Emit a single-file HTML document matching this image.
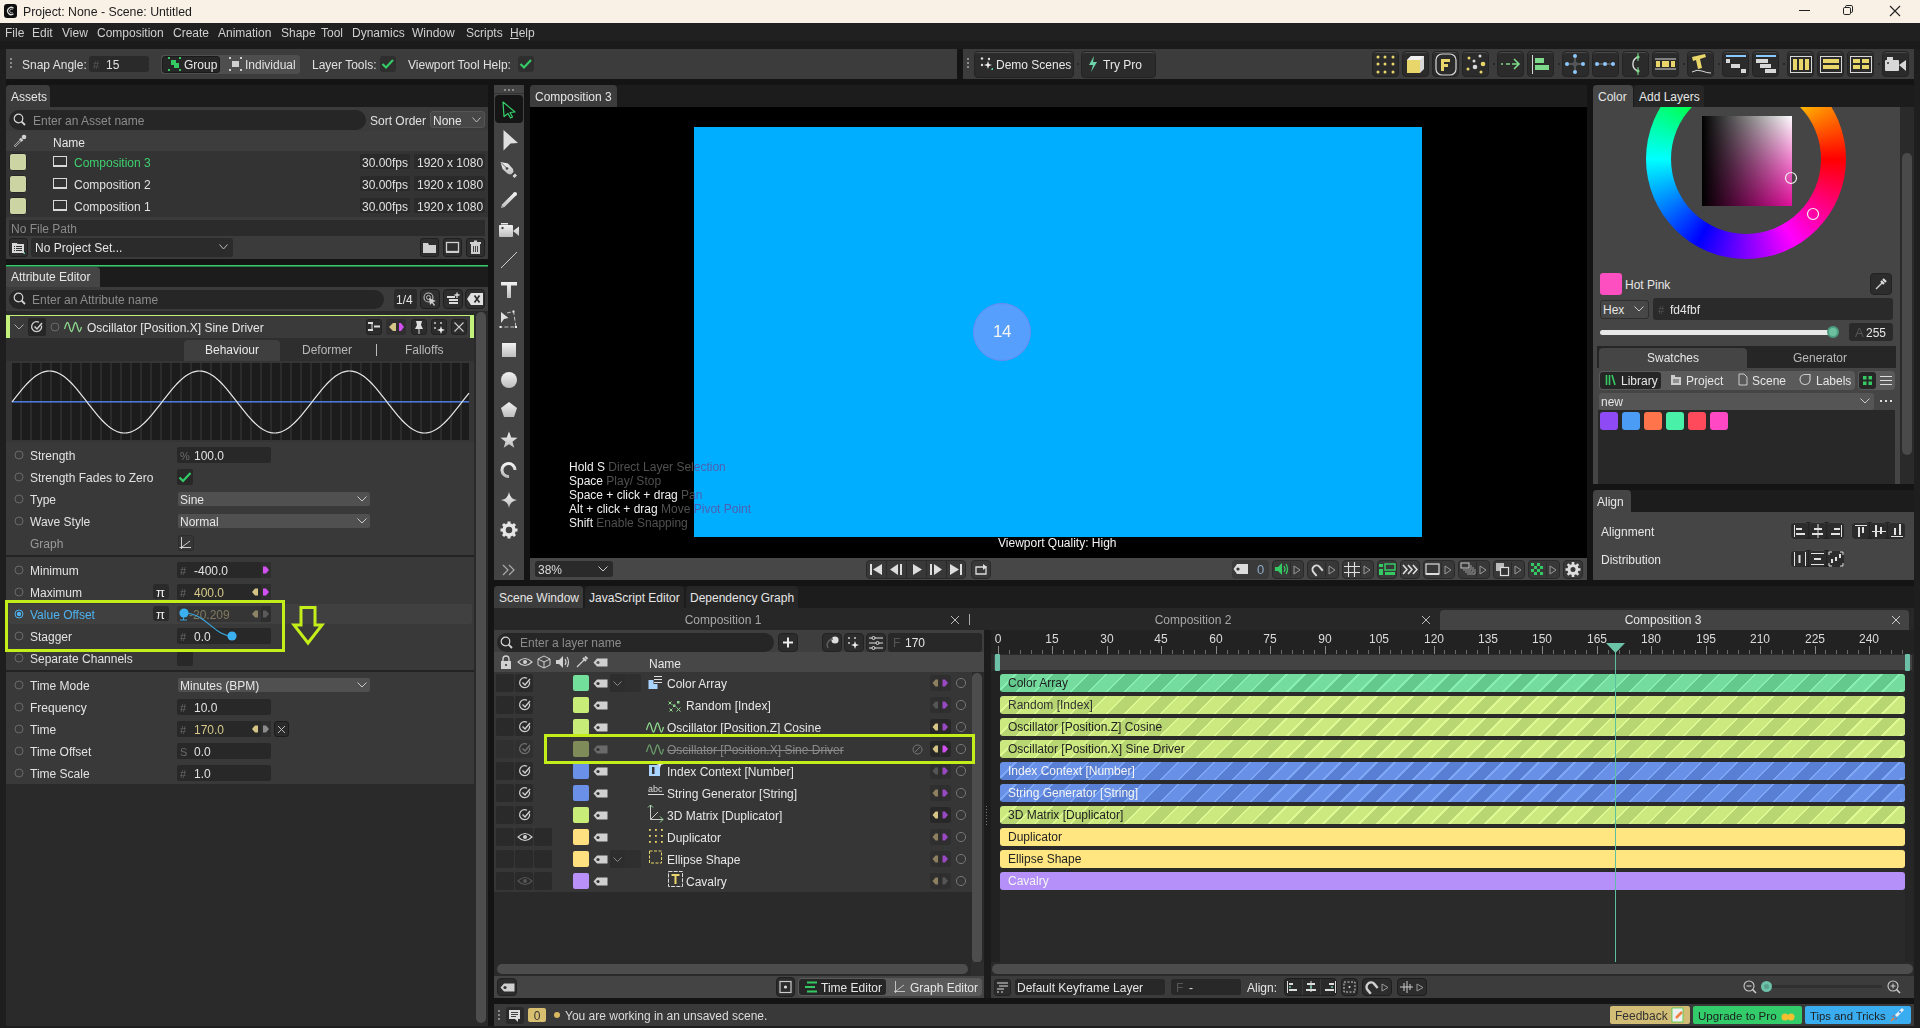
<!DOCTYPE html>
<html><head><meta charset="utf-8">
<style>
*{box-sizing:border-box;margin:0;padding:0}
html,body{width:1920px;height:1028px;overflow:hidden;background:#141414;font-family:"Liberation Sans",sans-serif;font-size:12px;color:#dcdcdc}
.a{position:absolute}
.t{position:absolute;white-space:nowrap;line-height:14px}
svg{position:absolute;overflow:visible}
</style></head><body>
<div class="a" style="left:0px;top:0px;width:1920px;height:23px;background:#f9f1e6;"></div>
<div class="a" style="left:4px;top:4px;width:13px;height:14px;background:#0e0e0e;border-radius:3px"></div>
<svg style="left:4px;top:4px;" width="13" height="14" viewBox="0 0 13 14"><path d="M9.5 4.2 A3.6 3.6 0 1 0 9.5 9.8" fill="none" stroke="#ddd" stroke-width="1.3"/><path d="M8.6 5.6 A1.8 1.8 0 1 0 8.6 8.4" fill="none" stroke="#ddd" stroke-width="0.8"/></svg>
<div class="t" style="left:23px;top:5px;color:#1c1c1c;font-size:12.3px;">Project: None - Scene: Untitled</div>
<div class="a" style="left:1799px;top:10px;width:11px;height:1px;background:#222;"></div>
<svg style="left:1842px;top:4px;" width="12" height="12" viewBox="0 0 12 12"><rect x="1.5" y="3.5" width="7" height="7" rx="1.2" fill="none" stroke="#222" stroke-width="1"/><path d="M3.5 3.5 V2.8 a1.3 1.3 0 0 1 1.3 -1.3 H9.2 a1.3 1.3 0 0 1 1.3 1.3 V7.2 a1.3 1.3 0 0 1 -1.3 1.3 H8.5" fill="none" stroke="#222" stroke-width="1"/></svg>
<svg style="left:1889px;top:5px;" width="12" height="12" viewBox="0 0 12 12"><path d="M1 1 L11 11 M11 1 L1 11" stroke="#222" stroke-width="1.1"/></svg>
<div class="a" style="left:0px;top:23px;width:1920px;height:18px;background:#202020;"></div>
<div class="a" style="left:0px;top:41px;width:1920px;height:8px;background:#1b1b1b;"></div>
<div class="a" style="left:0px;top:49px;width:6px;height:979px;background:#1e1e1e;"></div>
<div class="a" style="left:1914px;top:49px;width:6px;height:979px;background:#1e1e1e;"></div>
<div class="t" style="left:5px;top:26px;color:#d0d0d0;font-size:12px;">File</div>
<div class="t" style="left:32px;top:26px;color:#d0d0d0;font-size:12px;">Edit</div>
<div class="t" style="left:62px;top:26px;color:#d0d0d0;font-size:12px;">View</div>
<div class="t" style="left:97px;top:26px;color:#d0d0d0;font-size:12px;">Composition</div>
<div class="t" style="left:173px;top:26px;color:#d0d0d0;font-size:12px;">Create</div>
<div class="t" style="left:218px;top:26px;color:#d0d0d0;font-size:12px;">Animation</div>
<div class="t" style="left:281px;top:26px;color:#d0d0d0;font-size:12px;">Shape</div>
<div class="t" style="left:321px;top:26px;color:#d0d0d0;font-size:12px;">Tool</div>
<div class="t" style="left:352px;top:26px;color:#d0d0d0;font-size:12px;">Dynamics</div>
<div class="t" style="left:412px;top:26px;color:#d0d0d0;font-size:12px;">Window</div>
<div class="t" style="left:466px;top:26px;color:#d0d0d0;font-size:12px;">Scripts</div>
<div class="t" style="left:510px;top:26px;color:#d0d0d0;font-size:12px;"><u>H</u>elp</div>
<div class="a" style="left:6px;top:49px;width:951px;height:30px;background:#3c3c3c;"></div>
<div class="a" style="left:10px;top:58px;width:2px;height:2px;background:#8a8a8a;"></div>
<div class="a" style="left:10px;top:62px;width:2px;height:2px;background:#8a8a8a;"></div>
<div class="a" style="left:10px;top:66px;width:2px;height:2px;background:#8a8a8a;"></div>
<div class="t" style="left:22px;top:58px;color:#e0e0e0;font-size:12px;">Snap Angle:</div>
<div class="a" style="left:89px;top:56px;width:60px;height:16px;background:#2a2a2a;border-radius:3px"></div>
<div class="t" style="left:93px;top:58px;color:#5a5a5a;font-size:11px;">#</div>
<div class="t" style="left:106px;top:58px;color:#e0e0e0;font-size:12px;">15</div>
<div class="a" style="left:161px;top:55px;width:139px;height:19px;background:#4e4e4e;border-radius:3px"></div>
<div class="a" style="left:162px;top:56px;width:58px;height:17px;background:#262626;border-radius:3px;border:1px solid #1a1a1a"></div>
<svg style="left:168px;top:57px;" width="13" height="14" viewBox="0 0 13 14"><rect x="3" y="3" width="5" height="5" fill="#35c964"/><rect x="6" y="6" width="5" height="5" fill="#35c964"/><rect x="0" y="0" width="2" height="2" fill="#35c964"/><rect x="11" y="0" width="2" height="2" fill="#35c964"/><rect x="0" y="12" width="2" height="2" fill="#35c964"/><rect x="11" y="12" width="2" height="2" fill="#35c964"/></svg>
<div class="t" style="left:184px;top:58px;color:#e8e8e8;font-size:12px;">Group</div>
<svg style="left:229px;top:57px;" width="13" height="14" viewBox="0 0 13 14"><rect x="3" y="4" width="7" height="6" fill="#cfcfcf"/><rect x="0" y="0" width="2" height="2" fill="#cfcfcf"/><rect x="11" y="0" width="2" height="2" fill="#cfcfcf"/><rect x="0" y="12" width="2" height="2" fill="#cfcfcf"/><rect x="11" y="12" width="2" height="2" fill="#cfcfcf"/></svg>
<div class="t" style="left:245px;top:58px;color:#e0e0e0;font-size:12px;">Individual</div>
<div class="t" style="left:312px;top:58px;color:#e0e0e0;font-size:12px;">Layer Tools:</div>
<div class="a" style="left:380px;top:56px;width:16px;height:16px;background:#2e2e2e;border-radius:3px"></div>
<svg style="left:380px;top:56px;" width="16" height="16" viewBox="0 0 16 16"><path d="M2.5 8 L6 11.5 L13 4" fill="none" stroke="#33cc66" stroke-width="2.2"/></svg>
<div class="t" style="left:408px;top:58px;color:#e0e0e0;font-size:12px;">Viewport Tool Help:</div>
<div class="a" style="left:518px;top:56px;width:16px;height:16px;background:#2e2e2e;border-radius:3px"></div>
<svg style="left:518px;top:56px;" width="16" height="16" viewBox="0 0 16 16"><path d="M2.5 8 L6 11.5 L13 4" fill="none" stroke="#33cc66" stroke-width="2.2"/></svg>
<div class="a" style="left:963px;top:49px;width:951px;height:30px;background:#3c3c3c;"></div>
<div class="a" style="left:967px;top:58px;width:2px;height:2px;background:#8a8a8a;"></div>
<div class="a" style="left:967px;top:62px;width:2px;height:2px;background:#8a8a8a;"></div>
<div class="a" style="left:967px;top:66px;width:2px;height:2px;background:#8a8a8a;"></div>
<div class="a" style="left:974px;top:51px;width:100px;height:27px;background:#2b2b2b;border-radius:4px;border:1px solid #232323;box-shadow:inset 0 1px 0 #4f4f4f"></div>
<svg style="left:980px;top:56px;" width="14" height="16" viewBox="0 0 14 16"><circle cx="2" cy="2.5" r="1.2" fill="#ddd"/><circle cx="9" cy="3" r="1.2" fill="#ddd"/><circle cx="2" cy="9" r="1.2" fill="#ddd"/><path d="M8 5 L9 8 L12 9 L9 10 L8 13 L7 10 L4 9 L7 8Z" fill="#eee"/><path d="M12 12 L13 12 L13 14 L11 14Z" fill="#5ad0a0"/></svg>
<div class="t" style="left:996px;top:58px;color:#e8e8e8;font-size:12px;">Demo Scenes</div>
<div class="a" style="left:1077px;top:63px;width:2px;height:2px;background:#2a2a2a;"></div>
<div class="a" style="left:1081px;top:51px;width:75px;height:27px;background:#2b2b2b;border-radius:4px;border:1px solid #232323;box-shadow:inset 0 1px 0 #4f4f4f"></div>
<svg style="left:1088px;top:56px;" width="10" height="16" viewBox="0 0 10 16"><path d="M6 0 L1 9 L5 9 L3 16 L9 6 L5 6 Z" fill="#6cd4a8"/></svg>
<div class="t" style="left:1103px;top:58px;color:#e8e8e8;font-size:12px;">Try Pro</div>
<div class="a" style="left:1372px;top:51px;width:27px;height:26px;background:#2b2b2b;border-radius:4px;border:1px solid #232323;box-shadow:inset 0 1px 0 #4a4a4a"></div>
<div class="a" style="left:1402px;top:51px;width:27px;height:26px;background:#2b2b2b;border-radius:4px;border:1px solid #232323;box-shadow:inset 0 1px 0 #4a4a4a"></div>
<div class="a" style="left:1432px;top:51px;width:27px;height:26px;background:#2b2b2b;border-radius:4px;border:1px solid #232323;box-shadow:inset 0 1px 0 #4a4a4a"></div>
<div class="a" style="left:1462px;top:51px;width:27px;height:26px;background:#2b2b2b;border-radius:4px;border:1px solid #232323;box-shadow:inset 0 1px 0 #4a4a4a"></div>
<div class="a" style="left:1497px;top:51px;width:27px;height:26px;background:#2b2b2b;border-radius:4px;border:1px solid #232323;box-shadow:inset 0 1px 0 #4a4a4a"></div>
<div class="a" style="left:1527px;top:51px;width:27px;height:26px;background:#2b2b2b;border-radius:4px;border:1px solid #232323;box-shadow:inset 0 1px 0 #4a4a4a"></div>
<div class="a" style="left:1562px;top:51px;width:27px;height:26px;background:#2b2b2b;border-radius:4px;border:1px solid #232323;box-shadow:inset 0 1px 0 #4a4a4a"></div>
<div class="a" style="left:1592px;top:51px;width:27px;height:26px;background:#2b2b2b;border-radius:4px;border:1px solid #232323;box-shadow:inset 0 1px 0 #4a4a4a"></div>
<div class="a" style="left:1622px;top:51px;width:27px;height:26px;background:#2b2b2b;border-radius:4px;border:1px solid #232323;box-shadow:inset 0 1px 0 #4a4a4a"></div>
<div class="a" style="left:1652px;top:51px;width:27px;height:26px;background:#2b2b2b;border-radius:4px;border:1px solid #232323;box-shadow:inset 0 1px 0 #4a4a4a"></div>
<div class="a" style="left:1687px;top:51px;width:27px;height:26px;background:#2b2b2b;border-radius:4px;border:1px solid #232323;box-shadow:inset 0 1px 0 #4a4a4a"></div>
<div class="a" style="left:1722px;top:51px;width:27px;height:26px;background:#2b2b2b;border-radius:4px;border:1px solid #232323;box-shadow:inset 0 1px 0 #4a4a4a"></div>
<div class="a" style="left:1752px;top:51px;width:27px;height:26px;background:#2b2b2b;border-radius:4px;border:1px solid #232323;box-shadow:inset 0 1px 0 #4a4a4a"></div>
<div class="a" style="left:1787px;top:51px;width:27px;height:26px;background:#2b2b2b;border-radius:4px;border:1px solid #232323;box-shadow:inset 0 1px 0 #4a4a4a"></div>
<div class="a" style="left:1817px;top:51px;width:27px;height:26px;background:#2b2b2b;border-radius:4px;border:1px solid #232323;box-shadow:inset 0 1px 0 #4a4a4a"></div>
<div class="a" style="left:1847px;top:51px;width:27px;height:26px;background:#2b2b2b;border-radius:4px;border:1px solid #232323;box-shadow:inset 0 1px 0 #4a4a4a"></div>
<div class="a" style="left:1882px;top:51px;width:27px;height:26px;background:#2b2b2b;border-radius:4px;border:1px solid #232323;box-shadow:inset 0 1px 0 #4a4a4a"></div>
<div class="a" style="left:1493px;top:63px;width:2px;height:2px;background:#262626;"></div>
<div class="a" style="left:1558px;top:63px;width:2px;height:2px;background:#262626;"></div>
<div class="a" style="left:1683px;top:63px;width:2px;height:2px;background:#262626;"></div>
<div class="a" style="left:1718px;top:63px;width:2px;height:2px;background:#262626;"></div>
<div class="a" style="left:1783px;top:63px;width:2px;height:2px;background:#262626;"></div>
<div class="a" style="left:1878px;top:63px;width:2px;height:2px;background:#262626;"></div>
<svg style="left:1372px;top:51px;" width="27" height="26" viewBox="0 0 27 26"><circle cx="6" cy="6" r="1.5" fill="#e9d66b"/><circle cx="6" cy="13" r="1.5" fill="#e9d66b"/><circle cx="6" cy="21" r="1.5" fill="#e9d66b"/><circle cx="13" cy="6" r="1.5" fill="#e9d66b"/><circle cx="13" cy="13" r="1.5" fill="#e9d66b"/><circle cx="13" cy="21" r="1.5" fill="#e9d66b"/><circle cx="21" cy="6" r="1.5" fill="#e9d66b"/><circle cx="21" cy="13" r="1.5" fill="#e9d66b"/><circle cx="21" cy="21" r="1.5" fill="#e9d66b"/></svg>
<svg style="left:1402px;top:51px;" width="27" height="26" viewBox="0 0 27 26"><path d="M5 9 L9 5 L22 5 L22 18 L18 22 L5 22Z" fill="#d8d8d8"/><rect x="5" y="9" width="13" height="13" fill="#e9d66b"/><path d="M5 9 L9 5 L22 5 L18 9Z" fill="#f0f0f0"/></svg>
<svg style="left:1432px;top:51px;" width="27" height="26" viewBox="0 0 27 26"><rect x="4" y="3" width="20" height="21" rx="6" fill="none" stroke="#d8d8d8" stroke-width="1.2"/><rect x="9" y="8" width="3" height="12" fill="#e9d66b"/><rect x="9" y="8" width="9" height="3" fill="#e9d66b"/><rect x="9" y="13" width="7" height="3" fill="#e9d66b"/></svg>
<svg style="left:1462px;top:51px;" width="27" height="26" viewBox="0 0 27 26"><circle cx="7" cy="7" r="1.5" fill="#e9d66b"/><circle cx="18" cy="5" r="1.5" fill="#d8d8d8"/><circle cx="12" cy="10" r="1.5" fill="#d8d8d8"/><circle cx="21" cy="13" r="2.3" fill="#e9d66b"/><circle cx="13" cy="16" r="2.3" fill="#d8d8d8"/><circle cx="6" cy="18" r="1.5" fill="#e9d66b"/><circle cx="19" cy="21" r="1.5" fill="#e9d66b"/></svg>
<svg style="left:1497px;top:51px;" width="27" height="26" viewBox="0 0 27 26"><path d="M4 13 H6 M9 13 H13 M15 13 H22 M17 8 L22 13 L17 18" fill="none" stroke="#7fd98a" stroke-width="1.6"/></svg>
<svg style="left:1527px;top:51px;" width="27" height="26" viewBox="0 0 27 26"><rect x="5" y="4" width="1" height="19" fill="#d8d8d8"/><rect x="8" y="7" width="9" height="5" fill="#7fd98a"/><rect x="8" y="14" width="14" height="5" fill="#7fd98a"/></svg>
<svg style="left:1562px;top:51px;" width="27" height="26" viewBox="0 0 27 26"><circle cx="13" cy="5" r="2" fill="#8cc8ff"/><circle cx="13" cy="21" r="2" fill="#8cc8ff"/><circle cx="5" cy="13" r="2" fill="#8cc8ff"/><circle cx="21" cy="13" r="2" fill="#8cc8ff"/><circle cx="13" cy="13" r="2" fill="#8cc8ff"/><path d="M13 7 V19 M7 13 H19" stroke="#555" stroke-width="2"/></svg>
<svg style="left:1592px;top:51px;" width="27" height="26" viewBox="0 0 27 26"><path d="M5 13 H21" stroke="#555" stroke-width="2"/><circle cx="5" cy="13" r="2" fill="#8cc8ff"/><circle cx="13" cy="13" r="2" fill="#8cc8ff"/><circle cx="21" cy="13" r="2" fill="#8cc8ff"/></svg>
<svg style="left:1622px;top:51px;" width="27" height="26" viewBox="0 0 27 26"><path d="M16 6 A8 7.5 0 0 0 16 20" fill="none" stroke="#d8d8d8" stroke-width="1.4"/><circle cx="16" cy="6" r="1.6" fill="#7fd98a"/><circle cx="16" cy="20" r="1.6" fill="#7fd98a"/><path d="M16 2 V10 M16 16 V24" stroke="#7fd98a" stroke-width="1"/></svg>
<svg style="left:1652px;top:51px;" width="27" height="26" viewBox="0 0 27 26"><path d="M3 8 H24 M3 18 H24" stroke="#d8d8d8" stroke-width="1"/><rect x="4" y="10" width="4" height="6" fill="#e9d66b"/><rect x="10" y="10" width="7" height="6" fill="#e9d66b"/><rect x="19" y="10" width="4" height="6" fill="#e9d66b"/></svg>
<svg style="left:1687px;top:51px;" width="27" height="26" viewBox="0 0 27 26"><path d="M5 6 L18 3 L19 6 L13 8 L15 17 L11 18 L9 9 L6 10Z" fill="#e9d66b"/><path d="M5 21 Q10 18 15 20 T24 22" fill="none" stroke="#d8d8d8" stroke-width="1"/></svg>
<svg style="left:1722px;top:51px;" width="27" height="26" viewBox="0 0 27 26"><rect x="4" y="4" width="20" height="2" fill="#8cc8ff"/><rect x="4" y="8" width="4" height="4" fill="#d8d8d8"/><rect x="9" y="13" width="9" height="4" fill="#d8d8d8"/><rect x="19" y="18" width="5" height="4" fill="#d8d8d8"/></svg>
<svg style="left:1752px;top:51px;" width="27" height="26" viewBox="0 0 27 26"><rect x="4" y="4" width="20" height="2" fill="#8cc8ff"/><rect x="4" y="8" width="12" height="4" fill="#d8d8d8"/><rect x="8" y="13" width="11" height="4" fill="#d8d8d8"/><rect x="13" y="18" width="11" height="4" fill="#d8d8d8"/></svg>
<svg style="left:1787px;top:51px;" width="27" height="26" viewBox="0 0 27 26"><rect x="3.5" y="5.5" width="21" height="16" fill="none" stroke="#d8d8d8" stroke-width="1"/><rect x="6" y="8" width="4" height="11" fill="#e9d66b"/><rect x="12" y="8" width="4" height="11" fill="#e9d66b"/><rect x="18" y="8" width="4" height="11" fill="#e9d66b"/></svg>
<svg style="left:1817px;top:51px;" width="27" height="26" viewBox="0 0 27 26"><rect x="3.5" y="5.5" width="21" height="16" fill="none" stroke="#d8d8d8" stroke-width="1"/><rect x="6" y="8" width="16" height="4" fill="#e9d66b"/><rect x="6" y="14" width="16" height="4" fill="#e9d66b"/></svg>
<svg style="left:1847px;top:51px;" width="27" height="26" viewBox="0 0 27 26"><rect x="3.5" y="5.5" width="21" height="16" fill="none" stroke="#d8d8d8" stroke-width="1"/><rect x="6" y="8" width="7" height="4" fill="#e9d66b"/><rect x="15" y="8" width="7" height="4" fill="#e9d66b"/><rect x="6" y="14" width="7" height="4" fill="#e9d66b"/><rect x="15" y="14" width="7" height="4" fill="#e9d66b"/></svg>
<svg style="left:1882px;top:51px;" width="27" height="26" viewBox="0 0 27 26"><rect x="3" y="9" width="14" height="11" rx="1" fill="#d8d8d8"/><rect x="5" y="6" width="6" height="3" fill="#d8d8d8"/><path d="M17 14 L24 9 V20Z" fill="#d8d8d8"/><circle cx="6" cy="12" r="1" fill="#333"/></svg>
<div class="a" style="left:6px;top:85px;width:482px;height:22px;background:#1c1c1c;"></div>
<div class="a" style="left:6px;top:85px;width:44px;height:22px;background:#3c3c3c;border-radius:4px 4px 0 0"></div>
<div class="t" style="left:11px;top:90px;color:#e6e6e6;font-size:12px;">Assets</div>
<div class="a" style="left:6px;top:107px;width:482px;height:24px;background:#3b3b3b;"></div>
<div class="a" style="left:9px;top:110px;width:357px;height:20px;background:#262626;border-radius:10px"></div>
<svg style="left:13px;top:113px;" width="14" height="14" viewBox="0 0 14 14"><circle cx="5.5" cy="5.5" r="4.3" fill="none" stroke="#d6d6d6" stroke-width="1.2"/><path d="M8.6 8.6 L12 12" stroke="#d6d6d6" stroke-width="1.8"/></svg>
<div class="t" style="left:33px;top:114px;color:#8c8c8c;font-size:12px;">Enter an Asset name</div>
<div class="t" style="left:370px;top:114px;color:#e0e0e0;font-size:12px;">Sort Order</div>
<div class="a" style="left:430px;top:111px;width:55px;height:17px;background:#474747;border-radius:3px;border:1px solid #555"></div>
<div class="t" style="left:433px;top:114px;color:#e6e6e6;font-size:12px;">None</div>
<svg style="left:472px;top:117px;" width="9" height="6" viewBox="0 0 9 6"><path d="M0.5 0.5 L4.5 5 L8.5 0.5" fill="none" stroke="#bbb" stroke-width="1"/></svg>
<div class="a" style="left:6px;top:131px;width:482px;height:20px;background:#3d3d3d;"></div>
<svg style="left:13px;top:134px;" width="14" height="14" viewBox="0 0 14 14"><path d="M1.5 12.5 L8 6" stroke="#aaa" stroke-width="2.2"/><path d="M2 12 L8 6" stroke="#333" stroke-width="0.8"/><path d="M7 4.5 L9.5 7" stroke="#d0d0d0" stroke-width="2.4"/><circle cx="11" cy="3" r="2.3" fill="#d0d0d0"/></svg>
<div class="t" style="left:53px;top:136px;color:#e6e6e6;font-size:12px;">Name</div>
<div class="a" style="left:6px;top:151px;width:482px;height:66px;background:#333333;"></div>
<div class="a" style="left:9px;top:153px;width:18px;height:18px;background:#ccd4a4;border-radius:3px;border:1px solid #262626"></div>
<svg style="left:53px;top:155px;" width="14" height="14" viewBox="0 0 14 14"><rect x="0.5" y="1.5" width="13" height="10" fill="none" stroke="#d8d8d8" stroke-width="1"/><rect x="0" y="10" width="14" height="2" fill="#d8d8d8"/></svg>
<div class="t" style="left:74px;top:156px;color:#3ecf6e;font-size:12px;">Composition 3</div>
<div class="a" style="left:360px;top:154px;width:50px;height:15px;background:#2a2a2a;border-radius:2px"></div>
<div class="t" style="left:362px;top:156px;color:#e2e2e2;font-size:12px;">30.00fps</div>
<div class="a" style="left:414px;top:154px;width:71px;height:15px;background:#2a2a2a;border-radius:2px"></div>
<div class="t" style="left:417px;top:156px;color:#e2e2e2;font-size:12px;">1920 x 1080</div>
<div class="a" style="left:9px;top:175px;width:18px;height:18px;background:#ccd4a4;border-radius:3px;border:1px solid #262626"></div>
<svg style="left:53px;top:177px;" width="14" height="14" viewBox="0 0 14 14"><rect x="0.5" y="1.5" width="13" height="10" fill="none" stroke="#d8d8d8" stroke-width="1"/><rect x="0" y="10" width="14" height="2" fill="#d8d8d8"/></svg>
<div class="t" style="left:74px;top:178px;color:#e2e2e2;font-size:12px;">Composition 2</div>
<div class="a" style="left:360px;top:176px;width:50px;height:15px;background:#2a2a2a;border-radius:2px"></div>
<div class="t" style="left:362px;top:178px;color:#e2e2e2;font-size:12px;">30.00fps</div>
<div class="a" style="left:414px;top:176px;width:71px;height:15px;background:#2a2a2a;border-radius:2px"></div>
<div class="t" style="left:417px;top:178px;color:#e2e2e2;font-size:12px;">1920 x 1080</div>
<div class="a" style="left:9px;top:197px;width:18px;height:18px;background:#ccd4a4;border-radius:3px;border:1px solid #262626"></div>
<svg style="left:53px;top:199px;" width="14" height="14" viewBox="0 0 14 14"><rect x="0.5" y="1.5" width="13" height="10" fill="none" stroke="#d8d8d8" stroke-width="1"/><rect x="0" y="10" width="14" height="2" fill="#d8d8d8"/></svg>
<div class="t" style="left:74px;top:200px;color:#e2e2e2;font-size:12px;">Composition 1</div>
<div class="a" style="left:360px;top:198px;width:50px;height:15px;background:#2a2a2a;border-radius:2px"></div>
<div class="t" style="left:362px;top:200px;color:#e2e2e2;font-size:12px;">30.00fps</div>
<div class="a" style="left:414px;top:198px;width:71px;height:15px;background:#2a2a2a;border-radius:2px"></div>
<div class="t" style="left:417px;top:200px;color:#e2e2e2;font-size:12px;">1920 x 1080</div>
<div class="a" style="left:6px;top:217px;width:482px;height:42px;background:#3b3b3b;"></div>
<div class="a" style="left:9px;top:220px;width:476px;height:16px;background:#2b2b2b;"></div>
<div class="t" style="left:11px;top:222px;color:#8a8a8a;font-size:12px;">No File Path</div>
<div class="a" style="left:9px;top:238px;width:19px;height:19px;background:#2e2e2e;border-radius:3px;border:1px solid #1f1f1f"></div>
<svg style="left:11px;top:241px;" width="15" height="14" viewBox="0 0 15 14"><rect x="1" y="3" width="12" height="9" fill="#d8d8d8"/><path d="M1 2.5 H6 L7 3.5" fill="none" stroke="#d8d8d8" stroke-width="1"/><path d="M3 5.5 H4 M5 5.5 H11 M3 7.5 H4 M5 7.5 H11 M3 9.5 H4 M5 9.5 H11" stroke="#333" stroke-width="1"/><path d="M12 13 L14 11 V13Z" fill="#5ad0a0"/></svg>
<div class="a" style="left:31px;top:238px;width:202px;height:19px;background:#2b2b2b;border-radius:3px"></div>
<div class="t" style="left:35px;top:241px;color:#e6e6e6;font-size:12px;">No Project Set...</div>
<svg style="left:219px;top:244px;" width="9" height="6" viewBox="0 0 9 6"><path d="M0.5 0.5 L4.5 5 L8.5 0.5" fill="none" stroke="#bbb" stroke-width="1"/></svg>
<div class="a" style="left:420px;top:238px;width:19px;height:19px;background:#2e2e2e;border-radius:3px;border:1px solid #1f1f1f"></div>
<div class="a" style="left:443px;top:238px;width:19px;height:19px;background:#2e2e2e;border-radius:3px;border:1px solid #1f1f1f"></div>
<div class="a" style="left:466px;top:238px;width:19px;height:19px;background:#2e2e2e;border-radius:3px;border:1px solid #1f1f1f"></div>
<svg style="left:422px;top:241px;" width="16" height="13" viewBox="0 0 16 13"><path d="M1 2 H6 L7 4 H14 V12 H1Z" fill="#cfcfcf"/></svg>
<svg style="left:445px;top:241px;" width="16" height="13" viewBox="0 0 16 13"><rect x="1.5" y="1.5" width="12" height="9" fill="none" stroke="#cfcfcf" stroke-width="1.3"/><rect x="1" y="10" width="13" height="2" fill="#cfcfcf"/></svg>
<svg style="left:468px;top:240px;" width="16" height="15" viewBox="0 0 16 15"><rect x="3" y="4" width="9" height="10" fill="#cfcfcf"/><rect x="2" y="2" width="11" height="2" fill="#cfcfcf"/><rect x="6" y="0.5" width="3" height="2" fill="#cfcfcf"/><path d="M5.5 6 V12 M7.5 6 V12 M9.5 6 V12" stroke="#444" stroke-width="1"/></svg>
<div class="a" style="left:6px;top:265px;width:482px;height:1px;background:#33cc66;"></div>
<div class="a" style="left:6px;top:266px;width:482px;height:1px;background:#2a7a48;"></div>
<div class="a" style="left:6px;top:267px;width:482px;height:20px;background:#1c1c1c;"></div>
<div class="a" style="left:6px;top:267px;width:94px;height:20px;background:#454545;border-radius:0 4px 0 0"></div>
<div class="t" style="left:11px;top:270px;color:#e6e6e6;font-size:12px;">Attribute Editor</div>
<div class="a" style="left:6px;top:287px;width:482px;height:24px;background:#3b3b3b;"></div>
<div class="a" style="left:9px;top:290px;width:375px;height:19px;background:#262626;border-radius:10px"></div>
<svg style="left:13px;top:292px;" width="14" height="14" viewBox="0 0 14 14"><circle cx="5.5" cy="5.5" r="4.3" fill="none" stroke="#d6d6d6" stroke-width="1.2"/><path d="M8.6 8.6 L12 12" stroke="#d6d6d6" stroke-width="1.8"/></svg>
<div class="t" style="left:32px;top:293px;color:#8c8c8c;font-size:12px;">Enter an Attribute name</div>
<div class="a" style="left:394px;top:289px;width:23px;height:20px;background:#2a2a2a;border-radius:3px"></div>
<div class="t" style="left:396px;top:293px;color:#e6e6e6;font-size:12px;">1/4</div>
<div class="a" style="left:420px;top:289px;width:20px;height:20px;background:#2e2e2e;border-radius:4px;border:1px solid #1f1f1f"></div>
<div class="a" style="left:443px;top:289px;width:20px;height:20px;background:#2e2e2e;border-radius:4px;border:1px solid #1f1f1f"></div>
<div class="a" style="left:465px;top:289px;width:20px;height:20px;background:#2e2e2e;border-radius:4px;border:1px solid #1f1f1f"></div>
<svg style="left:423px;top:292px;" width="14" height="14" viewBox="0 0 14 14"><circle cx="5.5" cy="5.5" r="4.5" fill="none" stroke="#bbb" stroke-width="1.1"/><circle cx="5.5" cy="5.5" r="2" fill="none" stroke="#bbb" stroke-width="1"/><path d="M6 6 L13 9 L10 10 L12 13 L11 14 L9 11 L7 13Z" fill="#ccc"/></svg>
<svg style="left:446px;top:292px;" width="15" height="14" viewBox="0 0 15 14"><rect x="1" y="4" width="8" height="2" fill="#ddd"/><rect x="3" y="7" width="9" height="2" fill="#ddd"/><rect x="3" y="10" width="9" height="2" fill="#ddd"/><path d="M11 0.5 V6 M8.5 3 H13.5" stroke="#ddd" stroke-width="1.3"/></svg>
<svg style="left:467px;top:293px;" width="17" height="12" viewBox="0 0 17 12"><path d="M4 0 H16 V12 H4 L0 6Z" fill="#e0e0e0"/><path d="M7.5 2.5 L12.5 9.5 M12.5 2.5 L7.5 9.5" stroke="#2a2a2a" stroke-width="1.6"/></svg>
<div class="a" style="left:6px;top:311px;width:482px;height:715px;background:#2a2a2a;"></div>
<div class="a" style="left:476px;top:312px;width:10px;height:711px;background:#4d4d4d;border-radius:5px"></div>
<div class="a" style="left:6px;top:315px;width:468px;height:23px;background:#3a3a3a;"></div>
<div class="a" style="left:6px;top:315px;width:468px;height:1px;background:#c3f27a;"></div>
<div class="a" style="left:6px;top:315px;width:4px;height:23px;background:#c3f27a;"></div>
<div class="a" style="left:470px;top:315px;width:4px;height:23px;background:#c3f27a;"></div>
<svg style="left:14px;top:324px;" width="10" height="6" viewBox="0 0 10 6"><path d="M0.5 0.5 L5.0 5 L9.5 0.5" fill="none" stroke="#aaa" stroke-width="1"/></svg>
<div class="a" style="left:28px;top:318px;width:18px;height:18px;background:#262626;border-radius:2px"></div>
<svg style="left:30px;top:320px;" width="14" height="14" viewBox="0 0 14 14"><path d="M11.5 5.5 A5 5 0 1 1 9 2.2" fill="none" stroke="#d0d0d0" stroke-width="1.3"/><path d="M4.5 6.5 L7 9 L12 3" fill="none" stroke="#d0d0d0" stroke-width="1.5"/></svg>
<svg style="left:50px;top:322px;" width="10" height="10" viewBox="0 0 10 10"><circle cx="5" cy="5" r="4" fill="none" stroke="#6a6a6a" stroke-width="1"/></svg>
<svg style="left:64px;top:321px;" width="19" height="12" viewBox="0 0 19 12"><path d="M0.5 8 C1.5 5, 2.5 1.5, 3.5 1.5 C5 1.5, 6 10.5, 7.5 10.5 C9 10.5, 10 1.5, 11.5 1.5 C13 1.5, 14 10.5, 15.5 10.5 C16.3 10.5, 16.8 8, 17.5 6" fill="none" stroke="#8ed88e" stroke-width="1.3"/></svg>
<div class="t" style="left:87px;top:321px;color:#e6e6e6;font-size:12px;">Oscillator [Position.X] Sine Driver</div>
<div class="a" style="left:366px;top:319px;width:16px;height:16px;background:#2c2c2c;border-radius:3px;border:1px solid #222"></div>
<div class="a" style="left:411px;top:319px;width:16px;height:16px;background:#2c2c2c;border-radius:3px;border:1px solid #222"></div>
<div class="a" style="left:431px;top:319px;width:16px;height:16px;background:#2c2c2c;border-radius:3px;border:1px solid #222"></div>
<div class="a" style="left:451px;top:319px;width:16px;height:16px;background:#2c2c2c;border-radius:3px;border:1px solid #222"></div>
<div class="a" style="left:386px;top:319px;width:20px;height:16px;background:#2f2f2f;border-radius:3px"></div>
<svg style="left:367px;top:321px;" width="14" height="12" viewBox="0 0 14 12"><rect x="1" y="1" width="5" height="2" fill="#ddd"/><rect x="1" y="8" width="5" height="2" fill="#ddd"/><rect x="7" y="4.5" width="6" height="2" fill="#ddd"/><path d="M5 2 V9" stroke="#ddd" stroke-width="1"/></svg>
<svg style="left:388px;top:322px;" width="17" height="10" viewBox="0 0 17 10"><path d="M5 1 L1 5 L5 9 H8 V1Z" fill="#d4c485"/><path d="M11 1 H13 L16 5 L13 9 H11Z" fill="#d050f0"/></svg>
<svg style="left:413px;top:320px;" width="12" height="15" viewBox="0 0 12 15"><path d="M3 1 H9 L8 5 L10 9 H2 L4 5Z" fill="#ddd"/><rect x="5.5" y="9" width="1" height="5" fill="#ddd"/></svg>
<svg style="left:433px;top:321px;" width="13" height="13" viewBox="0 0 13 13"><circle cx="2" cy="2" r="1" fill="#ccc"/><circle cx="8" cy="2" r="1" fill="#ccc"/><circle cx="2" cy="7" r="1" fill="#ccc"/><path d="M8 5 L9 8 L12 9 L9 10 L8 13 L7 10 L4 9 L7 8Z" fill="#eee"/></svg>
<svg style="left:453px;top:321px;" width="12" height="12" viewBox="0 0 12 12"><path d="M1.5 1.5 L10.5 10.5 M10.5 1.5 L1.5 10.5" stroke="#ccc" stroke-width="1.1"/></svg>
<div class="a" style="left:6px;top:338px;width:468px;height:23px;background:#2e2e2e;"></div>
<div class="a" style="left:184px;top:340px;width:96px;height:21px;background:#3f3f3f;border-radius:4px 4px 0 0"></div>
<div class="t" style="left:32px;width:400px;text-align:center;top:343px;color:#e8e8e8;font-size:12px;">Behaviour</div>
<div class="t" style="left:302px;top:343px;color:#b8b8b8;font-size:12px;">Deformer</div>
<div class="a" style="left:376px;top:344px;width:1px;height:12px;background:#bbb;"></div>
<div class="t" style="left:405px;top:343px;color:#b8b8b8;font-size:12px;">Falloffs</div>
<div class="a" style="left:6px;top:361px;width:468px;height:81px;background:#353535;"></div>
<svg style="left:12px;top:363px;" width="457" height="77" viewBox="0 0 457 77"><rect width="457" height="77" fill="#1c1c1c"/><rect x="8" y="0" width="2" height="77" fill="#2b2b2b"/><rect x="18" y="0" width="2" height="77" fill="#2b2b2b"/><rect x="28" y="0" width="2" height="77" fill="#2b2b2b"/><rect x="38" y="0" width="2" height="77" fill="#2b2b2b"/><rect x="48" y="0" width="2" height="77" fill="#2b2b2b"/><rect x="58" y="0" width="2" height="77" fill="#2b2b2b"/><rect x="68" y="0" width="2" height="77" fill="#2b2b2b"/><rect x="78" y="0" width="2" height="77" fill="#2b2b2b"/><rect x="88" y="0" width="2" height="77" fill="#2b2b2b"/><rect x="98" y="0" width="2" height="77" fill="#2b2b2b"/><rect x="108" y="0" width="2" height="77" fill="#2b2b2b"/><rect x="118" y="0" width="2" height="77" fill="#2b2b2b"/><rect x="128" y="0" width="2" height="77" fill="#2b2b2b"/><rect x="138" y="0" width="2" height="77" fill="#2b2b2b"/><rect x="148" y="0" width="2" height="77" fill="#2b2b2b"/><rect x="158" y="0" width="2" height="77" fill="#2b2b2b"/><rect x="168" y="0" width="2" height="77" fill="#2b2b2b"/><rect x="178" y="0" width="2" height="77" fill="#2b2b2b"/><rect x="188" y="0" width="2" height="77" fill="#2b2b2b"/><rect x="198" y="0" width="2" height="77" fill="#2b2b2b"/><rect x="208" y="0" width="2" height="77" fill="#2b2b2b"/><rect x="218" y="0" width="2" height="77" fill="#2b2b2b"/><rect x="228" y="0" width="2" height="77" fill="#2b2b2b"/><rect x="238" y="0" width="2" height="77" fill="#2b2b2b"/><rect x="248" y="0" width="2" height="77" fill="#2b2b2b"/><rect x="258" y="0" width="2" height="77" fill="#2b2b2b"/><rect x="268" y="0" width="2" height="77" fill="#2b2b2b"/><rect x="278" y="0" width="2" height="77" fill="#2b2b2b"/><rect x="288" y="0" width="2" height="77" fill="#2b2b2b"/><rect x="298" y="0" width="2" height="77" fill="#2b2b2b"/><rect x="308" y="0" width="2" height="77" fill="#2b2b2b"/><rect x="318" y="0" width="2" height="77" fill="#2b2b2b"/><rect x="328" y="0" width="2" height="77" fill="#2b2b2b"/><rect x="338" y="0" width="2" height="77" fill="#2b2b2b"/><rect x="348" y="0" width="2" height="77" fill="#2b2b2b"/><rect x="358" y="0" width="2" height="77" fill="#2b2b2b"/><rect x="368" y="0" width="2" height="77" fill="#2b2b2b"/><rect x="378" y="0" width="2" height="77" fill="#2b2b2b"/><rect x="388" y="0" width="2" height="77" fill="#2b2b2b"/><rect x="398" y="0" width="2" height="77" fill="#2b2b2b"/><rect x="408" y="0" width="2" height="77" fill="#2b2b2b"/><rect x="418" y="0" width="2" height="77" fill="#2b2b2b"/><rect x="428" y="0" width="2" height="77" fill="#2b2b2b"/><rect x="438" y="0" width="2" height="77" fill="#2b2b2b"/><rect x="448" y="0" width="2" height="77" fill="#2b2b2b"/><rect x="0" y="38" width="457" height="1.6" fill="#4a78d8"/><polyline points="0,39.00 1,37.70 2,36.41 3,35.11 4,33.83 5,32.55 6,31.29 7,30.04 8,28.81 9,27.59 10,26.39 11,25.22 12,24.07 13,22.94 14,21.84 15,20.78 16,19.74 17,18.74 18,17.78 19,16.85 20,15.96 21,15.11 22,14.31 23,13.54 24,12.83 25,12.15 26,11.53 27,10.95 28,10.42 29,9.94 30,9.52 31,9.14 32,8.82 33,8.55 34,8.33 35,8.17 36,8.06 37,8.01 38,8.01 39,8.06 40,8.17 41,8.33 42,8.55 43,8.82 44,9.14 45,9.52 46,9.94 47,10.42 48,10.95 49,11.53 50,12.15 51,12.83 52,13.54 53,14.31 54,15.11 55,15.96 56,16.85 57,17.78 58,18.74 59,19.74 60,20.78 61,21.84 62,22.94 63,24.07 64,25.22 65,26.39 66,27.59 67,28.81 68,30.04 69,31.29 70,32.55 71,33.83 72,35.11 73,36.41 74,37.70 75,39.00 76,40.30 77,41.59 78,42.89 79,44.17 80,45.45 81,46.71 82,47.96 83,49.19 84,50.41 85,51.61 86,52.78 87,53.93 88,55.06 89,56.16 90,57.22 91,58.26 92,59.26 93,60.22 94,61.15 95,62.04 96,62.89 97,63.69 98,64.46 99,65.17 100,65.85 101,66.47 102,67.05 103,67.58 104,68.06 105,68.48 106,68.86 107,69.18 108,69.45 109,69.67 110,69.83 111,69.94 112,69.99 113,69.99 114,69.94 115,69.83 116,69.67 117,69.45 118,69.18 119,68.86 120,68.48 121,68.06 122,67.58 123,67.05 124,66.47 125,65.85 126,65.17 127,64.46 128,63.69 129,62.89 130,62.04 131,61.15 132,60.22 133,59.26 134,58.26 135,57.22 136,56.16 137,55.06 138,53.93 139,52.78 140,51.61 141,50.41 142,49.19 143,47.96 144,46.71 145,45.45 146,44.17 147,42.89 148,41.59 149,40.30 150,39.00 151,37.70 152,36.41 153,35.11 154,33.83 155,32.55 156,31.29 157,30.04 158,28.81 159,27.59 160,26.39 161,25.22 162,24.07 163,22.94 164,21.84 165,20.78 166,19.74 167,18.74 168,17.78 169,16.85 170,15.96 171,15.11 172,14.31 173,13.54 174,12.83 175,12.15 176,11.53 177,10.95 178,10.42 179,9.94 180,9.52 181,9.14 182,8.82 183,8.55 184,8.33 185,8.17 186,8.06 187,8.01 188,8.01 189,8.06 190,8.17 191,8.33 192,8.55 193,8.82 194,9.14 195,9.52 196,9.94 197,10.42 198,10.95 199,11.53 200,12.15 201,12.83 202,13.54 203,14.31 204,15.11 205,15.96 206,16.85 207,17.78 208,18.74 209,19.74 210,20.78 211,21.84 212,22.94 213,24.07 214,25.22 215,26.39 216,27.59 217,28.81 218,30.04 219,31.29 220,32.55 221,33.83 222,35.11 223,36.41 224,37.70 225,39.00 226,40.30 227,41.59 228,42.89 229,44.17 230,45.45 231,46.71 232,47.96 233,49.19 234,50.41 235,51.61 236,52.78 237,53.93 238,55.06 239,56.16 240,57.22 241,58.26 242,59.26 243,60.22 244,61.15 245,62.04 246,62.89 247,63.69 248,64.46 249,65.17 250,65.85 251,66.47 252,67.05 253,67.58 254,68.06 255,68.48 256,68.86 257,69.18 258,69.45 259,69.67 260,69.83 261,69.94 262,69.99 263,69.99 264,69.94 265,69.83 266,69.67 267,69.45 268,69.18 269,68.86 270,68.48 271,68.06 272,67.58 273,67.05 274,66.47 275,65.85 276,65.17 277,64.46 278,63.69 279,62.89 280,62.04 281,61.15 282,60.22 283,59.26 284,58.26 285,57.22 286,56.16 287,55.06 288,53.93 289,52.78 290,51.61 291,50.41 292,49.19 293,47.96 294,46.71 295,45.45 296,44.17 297,42.89 298,41.59 299,40.30 300,39.00 301,37.70 302,36.41 303,35.11 304,33.83 305,32.55 306,31.29 307,30.04 308,28.81 309,27.59 310,26.39 311,25.22 312,24.07 313,22.94 314,21.84 315,20.78 316,19.74 317,18.74 318,17.78 319,16.85 320,15.96 321,15.11 322,14.31 323,13.54 324,12.83 325,12.15 326,11.53 327,10.95 328,10.42 329,9.94 330,9.52 331,9.14 332,8.82 333,8.55 334,8.33 335,8.17 336,8.06 337,8.01 338,8.01 339,8.06 340,8.17 341,8.33 342,8.55 343,8.82 344,9.14 345,9.52 346,9.94 347,10.42 348,10.95 349,11.53 350,12.15 351,12.83 352,13.54 353,14.31 354,15.11 355,15.96 356,16.85 357,17.78 358,18.74 359,19.74 360,20.78 361,21.84 362,22.94 363,24.07 364,25.22 365,26.39 366,27.59 367,28.81 368,30.04 369,31.29 370,32.55 371,33.83 372,35.11 373,36.41 374,37.70 375,39.00 376,40.30 377,41.59 378,42.89 379,44.17 380,45.45 381,46.71 382,47.96 383,49.19 384,50.41 385,51.61 386,52.78 387,53.93 388,55.06 389,56.16 390,57.22 391,58.26 392,59.26 393,60.22 394,61.15 395,62.04 396,62.89 397,63.69 398,64.46 399,65.17 400,65.85 401,66.47 402,67.05 403,67.58 404,68.06 405,68.48 406,68.86 407,69.18 408,69.45 409,69.67 410,69.83 411,69.94 412,69.99 413,69.99 414,69.94 415,69.83 416,69.67 417,69.45 418,69.18 419,68.86 420,68.48 421,68.06 422,67.58 423,67.05 424,66.47 425,65.85 426,65.17 427,64.46 428,63.69 429,62.89 430,62.04 431,61.15 432,60.22 433,59.26 434,58.26 435,57.22 436,56.16 437,55.06 438,53.93 439,52.78 440,51.61 441,50.41 442,49.19 443,47.96 444,46.71 445,45.45 446,44.17 447,42.89 448,41.59 449,40.30 450,39.00 451,37.70 452,36.41 453,35.11 454,33.83 455,32.55 456,31.29 457,30.04" fill="none" stroke="#e8e8e8" stroke-width="1.2"/></svg>
<div class="a" style="left:6px;top:442px;width:468px;height:342px;background:#393939;"></div>
<div class="a" style="left:6px;top:555px;width:468px;height:2px;background:#232323;"></div>
<div class="a" style="left:6px;top:670px;width:468px;height:2px;background:#232323;"></div>
<div class="a" style="left:9px;top:604px;width:463px;height:20px;background:#404040;border-radius:2px"></div>
<svg style="left:14px;top:450px;" width="10" height="10" viewBox="0 0 10 10"><circle cx="5" cy="5" r="4" fill="none" stroke="#6a6a6a" stroke-width="1"/></svg>
<div class="t" style="left:30px;top:449px;color:#e2e2e2;font-size:12px;">Strength</div>
<div class="a" style="left:177px;top:447px;width:94px;height:16px;background:#282828;border-radius:2px"></div>
<div class="t" style="left:180px;top:449px;color:#6a6a6a;font-size:11px;">%</div>
<div class="t" style="left:194px;top:449px;color:#e2e2e2;font-size:12px;">100.0</div>
<svg style="left:14px;top:472px;" width="10" height="10" viewBox="0 0 10 10"><circle cx="5" cy="5" r="4" fill="none" stroke="#6a6a6a" stroke-width="1"/></svg>
<div class="t" style="left:30px;top:471px;color:#e2e2e2;font-size:12px;">Strength Fades to Zero</div>
<div class="a" style="left:177px;top:469px;width:16px;height:16px;background:#282828;border-radius:2px"></div>
<svg style="left:177px;top:469px;" width="16" height="16" viewBox="0 0 16 16"><path d="M2.5 8.5 L6 12 L13.5 4" fill="none" stroke="#33cc66" stroke-width="2.2"/></svg>
<svg style="left:14px;top:494px;" width="10" height="10" viewBox="0 0 10 10"><circle cx="5" cy="5" r="4" fill="none" stroke="#6a6a6a" stroke-width="1"/></svg>
<div class="t" style="left:30px;top:493px;color:#e2e2e2;font-size:12px;">Type</div>
<div class="a" style="left:178px;top:492px;width:192px;height:14px;background:#505050;border-radius:2px"></div>
<div class="t" style="left:180px;top:493px;color:#e6e6e6;font-size:12px;">Sine</div>
<svg style="left:357px;top:496px;" width="10" height="6" viewBox="0 0 10 6"><path d="M0.5 0.5 L5.0 5 L9.5 0.5" fill="none" stroke="#ccc" stroke-width="1"/></svg>
<svg style="left:14px;top:516px;" width="10" height="10" viewBox="0 0 10 10"><circle cx="5" cy="5" r="4" fill="none" stroke="#6a6a6a" stroke-width="1"/></svg>
<div class="t" style="left:30px;top:515px;color:#e2e2e2;font-size:12px;">Wave Style</div>
<div class="a" style="left:178px;top:514px;width:192px;height:14px;background:#505050;border-radius:2px"></div>
<div class="t" style="left:180px;top:515px;color:#e6e6e6;font-size:12px;">Normal</div>
<svg style="left:357px;top:518px;" width="10" height="6" viewBox="0 0 10 6"><path d="M0.5 0.5 L5.0 5 L9.5 0.5" fill="none" stroke="#ccc" stroke-width="1"/></svg>
<div class="t" style="left:30px;top:537px;color:#9a9a9a;font-size:12px;">Graph</div>
<div class="a" style="left:178px;top:535px;width:16px;height:16px;background:#363636;border-radius:3px;border:1px solid #2c2c2c"></div>
<svg style="left:178px;top:535px;" width="16" height="16" viewBox="0 0 16 16"><path d="M3.5 2 V14 M1.5 12.5 H13 M4 12 L12 6" stroke="#ddd" stroke-width="0.9" fill="none"/></svg>
<svg style="left:14px;top:565px;" width="10" height="10" viewBox="0 0 10 10"><circle cx="5" cy="5" r="4" fill="none" stroke="#6a6a6a" stroke-width="1"/></svg>
<div class="t" style="left:30px;top:564px;color:#e2e2e2;font-size:12px;">Minimum</div>
<div class="a" style="left:177px;top:562px;width:94px;height:16px;background:#282828;border-radius:2px"></div>
<div class="t" style="left:180px;top:564px;color:#6a6a6a;font-size:11px;">#</div>
<div class="t" style="left:194px;top:564px;color:#e2e2e2;font-size:12px;">-400.0</div>
<div class="a" style="left:261px;top:562px;width:10px;height:16px;background:#2e2e2e;border-radius:0 2px 2px 0"></div>
<svg style="left:249px;top:566px;" width="22" height="8" viewBox="0 0 22 8"><path d="M14 0.5 V7.5 H17 L20 4 L17 0.5Z" fill="#d050f0"/></svg>
<svg style="left:14px;top:587px;" width="10" height="10" viewBox="0 0 10 10"><circle cx="5" cy="5" r="4" fill="none" stroke="#6a6a6a" stroke-width="1"/></svg>
<div class="t" style="left:30px;top:586px;color:#e2e2e2;font-size:12px;">Maximum</div>
<div class="a" style="left:153px;top:584px;width:16px;height:15px;background:#2a2a2a;border-radius:3px"></div>
<div class="t" style="left:156px;top:586px;color:#f0f0f0;font-size:13px;">π</div>
<div class="a" style="left:177px;top:584px;width:94px;height:16px;background:#282828;border-radius:2px"></div>
<div class="t" style="left:180px;top:586px;color:#6a6a6a;font-size:11px;">#</div>
<div class="t" style="left:194px;top:586px;color:#d6c98a;font-size:12px;">400.0</div>
<div class="a" style="left:261px;top:584px;width:10px;height:16px;background:#2e2e2e;border-radius:0 2px 2px 0"></div>
<svg style="left:249px;top:588px;" width="22" height="8" viewBox="0 0 22 8"><path d="M9 0.5 V7.5 H6 L3 4 L6 0.5Z" fill="#d4c485"/><path d="M14 0.5 V7.5 H17 L20 4 L17 0.5Z" fill="#d050f0"/></svg>
<svg style="left:14px;top:609px;" width="10" height="10" viewBox="0 0 10 10"><circle cx="5" cy="5" r="4" fill="none" stroke="#4db3f2" stroke-width="1"/><circle cx="5" cy="5" r="2.2" fill="#4db3f2"/></svg>
<div class="t" style="left:30px;top:608px;color:#4db3f2;font-size:12px;">Value Offset</div>
<div class="a" style="left:153px;top:606px;width:16px;height:15px;background:#2a2a2a;border-radius:3px"></div>
<div class="t" style="left:156px;top:608px;color:#f0f0f0;font-size:13px;">π</div>
<div class="a" style="left:177px;top:606px;width:94px;height:16px;background:#353535;border-radius:2px"></div>
<div class="t" style="left:180px;top:608px;color:#6a6a6a;font-size:11px;"></div>
<div class="t" style="left:194px;top:608px;color:#7f7a5f;font-size:12px;"></div>
<div class="a" style="left:261px;top:606px;width:10px;height:16px;background:#2e2e2e;border-radius:0 2px 2px 0"></div>
<svg style="left:249px;top:610px;" width="22" height="8" viewBox="0 0 22 8"><path d="M9 0.5 V7.5 H6 L3 4 L6 0.5Z" fill="#8c8464"/><path d="M14 0.5 V7.5 H17 L20 4 L17 0.5Z" fill="#5a5a5a"/></svg>
<div class="t" style="left:189px;top:608px;color:#7f7a5f;font-size:12px;">-20.209</div>
<svg style="left:14px;top:631px;" width="10" height="10" viewBox="0 0 10 10"><circle cx="5" cy="5" r="4" fill="none" stroke="#6a6a6a" stroke-width="1"/></svg>
<div class="t" style="left:30px;top:630px;color:#e2e2e2;font-size:12px;">Stagger</div>
<div class="a" style="left:177px;top:628px;width:94px;height:16px;background:#282828;border-radius:2px"></div>
<div class="t" style="left:180px;top:630px;color:#6a6a6a;font-size:11px;">#</div>
<div class="t" style="left:194px;top:630px;color:#e2e2e2;font-size:12px;">0.0</div>
<svg style="left:14px;top:653px;" width="10" height="10" viewBox="0 0 10 10"><circle cx="5" cy="5" r="4" fill="none" stroke="#6a6a6a" stroke-width="1"/></svg>
<div class="t" style="left:30px;top:652px;color:#e2e2e2;font-size:12px;">Separate Channels</div>
<div class="a" style="left:177px;top:651px;width:16px;height:15px;background:#282828;border-radius:2px"></div>
<svg style="left:14px;top:680px;" width="10" height="10" viewBox="0 0 10 10"><circle cx="5" cy="5" r="4" fill="none" stroke="#6a6a6a" stroke-width="1"/></svg>
<div class="t" style="left:30px;top:679px;color:#e2e2e2;font-size:12px;">Time Mode</div>
<div class="a" style="left:178px;top:678px;width:192px;height:14px;background:#505050;border-radius:2px"></div>
<div class="t" style="left:180px;top:679px;color:#e6e6e6;font-size:12px;">Minutes (BPM)</div>
<svg style="left:357px;top:682px;" width="10" height="6" viewBox="0 0 10 6"><path d="M0.5 0.5 L5.0 5 L9.5 0.5" fill="none" stroke="#ccc" stroke-width="1"/></svg>
<svg style="left:14px;top:702px;" width="10" height="10" viewBox="0 0 10 10"><circle cx="5" cy="5" r="4" fill="none" stroke="#6a6a6a" stroke-width="1"/></svg>
<div class="t" style="left:30px;top:701px;color:#e2e2e2;font-size:12px;">Frequency</div>
<div class="a" style="left:177px;top:699px;width:94px;height:16px;background:#282828;border-radius:2px"></div>
<div class="t" style="left:180px;top:701px;color:#6a6a6a;font-size:11px;">#</div>
<div class="t" style="left:194px;top:701px;color:#e2e2e2;font-size:12px;">10.0</div>
<svg style="left:14px;top:724px;" width="10" height="10" viewBox="0 0 10 10"><circle cx="5" cy="5" r="4" fill="none" stroke="#6a6a6a" stroke-width="1"/></svg>
<div class="t" style="left:30px;top:723px;color:#e2e2e2;font-size:12px;">Time</div>
<div class="a" style="left:177px;top:721px;width:94px;height:16px;background:#282828;border-radius:2px"></div>
<div class="t" style="left:180px;top:723px;color:#6a6a6a;font-size:11px;">#</div>
<div class="t" style="left:194px;top:723px;color:#d6c98a;font-size:12px;">170.0</div>
<div class="a" style="left:261px;top:721px;width:10px;height:16px;background:#2e2e2e;border-radius:0 2px 2px 0"></div>
<svg style="left:249px;top:725px;" width="22" height="8" viewBox="0 0 22 8"><path d="M9 0.5 V7.5 H6 L3 4 L6 0.5Z" fill="#d4c485"/><path d="M14 0.5 V7.5 H17 L20 4 L17 0.5Z" fill="#8a8a8a"/></svg>
<div class="a" style="left:274px;top:721px;width:15px;height:16px;background:#2a2a2a;border-radius:3px;border:1px solid #1c1c1c"></div>
<svg style="left:274px;top:721px;" width="15" height="16" viewBox="0 0 15 16"><path d="M4 5 L11 12 M11 5 L4 12" stroke="#bbb" stroke-width="1"/></svg>
<svg style="left:14px;top:746px;" width="10" height="10" viewBox="0 0 10 10"><circle cx="5" cy="5" r="4" fill="none" stroke="#6a6a6a" stroke-width="1"/></svg>
<div class="t" style="left:30px;top:745px;color:#e2e2e2;font-size:12px;">Time Offset</div>
<div class="a" style="left:177px;top:743px;width:94px;height:16px;background:#282828;border-radius:2px"></div>
<div class="t" style="left:180px;top:745px;color:#6a6a6a;font-size:11px;">S</div>
<div class="t" style="left:194px;top:745px;color:#e2e2e2;font-size:12px;">0.0</div>
<svg style="left:14px;top:768px;" width="10" height="10" viewBox="0 0 10 10"><circle cx="5" cy="5" r="4" fill="none" stroke="#6a6a6a" stroke-width="1"/></svg>
<div class="t" style="left:30px;top:767px;color:#e2e2e2;font-size:12px;">Time Scale</div>
<div class="a" style="left:177px;top:765px;width:94px;height:16px;background:#282828;border-radius:2px"></div>
<div class="t" style="left:180px;top:767px;color:#6a6a6a;font-size:11px;">#</div>
<div class="t" style="left:194px;top:767px;color:#e2e2e2;font-size:12px;">1.0</div>
<svg style="left:178px;top:606px;" width="60" height="36" viewBox="0 0 60 36"><path d="M6 7 C 28 7, 36 30, 54 30" fill="none" stroke="#3aa6e0" stroke-width="1.1"/><circle cx="6" cy="7" r="4.6" fill="#3ab0f0"/><circle cx="54" cy="30" r="4.6" fill="#3ab0f0"/><path d="M2 14 H9 M5.5 11 V14" stroke="#3aa6e0" stroke-width="1"/></svg>
<div class="a" style="left:5px;top:600px;width:280px;height:52px;background:transparent;border:3px solid #c4ee1a"></div>
<svg style="left:292px;top:606px;" width="32" height="40" viewBox="0 0 32 40"><path d="M9 1.5 H23 V19 H30 L16 37 L2 19 H9Z" fill="none" stroke="#c4ee1a" stroke-width="3" stroke-linejoin="miter"/></svg>
<div class="a" style="left:494px;top:85px;width:30px;height:495px;background:#434343;"></div>
<div class="a" style="left:504px;top:89px;width:2px;height:2px;background:#8a8a8a;"></div>
<div class="a" style="left:508px;top:89px;width:2px;height:2px;background:#8a8a8a;"></div>
<div class="a" style="left:512px;top:89px;width:2px;height:2px;background:#8a8a8a;"></div>
<div class="a" style="left:494px;top:93px;width:30px;height:1px;background:#333;"></div>
<div class="a" style="left:495px;top:95px;width:28px;height:28px;background:#151515;border-radius:4px"></div>
<svg style="left:501px;top:101px;" width="16" height="18" viewBox="0 0 16 18"><path d="M2 1 L14 11 L9 11.5 L11.5 16 L9.5 17 L7 12.5 L3 15.5Z" fill="none" stroke="#35d06a" stroke-width="1.2" stroke-linejoin="round"/></svg>
<svg style="left:500px;top:131px;" width="18" height="18" viewBox="0 0 18 18"><defs><linearGradient id="g0" x1="0" y1="0" x2="0" y2="1"><stop offset="0" stop-color="#f2f2f2"/><stop offset="1" stop-color="#bdbdbd"/></linearGradient></defs><path d="M3.5 -1 L18 12 L10.5 12.5 L3.5 19.5Z" fill="#e0e0e0"/></svg>
<svg style="left:500px;top:161px;" width="18" height="18" viewBox="0 0 18 18"><defs><linearGradient id="g1" x1="0" y1="0" x2="0" y2="1"><stop offset="0" stop-color="#f2f2f2"/><stop offset="1" stop-color="#bdbdbd"/></linearGradient></defs><path d="M0.5 1 L8 2.5 L13 8 L13.5 11 L11 13.5 L8 13 L2.5 8Z" fill="url(#g1)"/><path d="M1 1.5 L6.5 7" stroke="#555" stroke-width="0.9"/><circle cx="7" cy="7.5" r="1.3" fill="#444"/><path d="M12.5 15 L15 12.5 L17 14.5 L14.5 17Z" fill="#d8d8d8"/></svg>
<svg style="left:500px;top:191px;" width="18" height="18" viewBox="0 0 18 18"><defs><linearGradient id="g2" x1="0" y1="0" x2="0" y2="1"><stop offset="0" stop-color="#f2f2f2"/><stop offset="1" stop-color="#bdbdbd"/></linearGradient></defs><path d="M1 17 L2 13.5 L13.5 2 L16 4.5 L4.5 16Z" fill="url(#g2)"/><circle cx="15" cy="3" r="2" fill="#eee"/><path d="M1 17 L2 14.5 L3.5 16Z" fill="#999"/></svg>
<svg style="left:500px;top:221px;" width="18" height="18" viewBox="0 0 18 18"><defs><linearGradient id="g3" x1="0" y1="0" x2="0" y2="1"><stop offset="0" stop-color="#f2f2f2"/><stop offset="1" stop-color="#bdbdbd"/></linearGradient></defs><rect x="-1" y="4" width="14" height="12" rx="1" fill="url(#g3)"/><rect x="1" y="2" width="7" height="1.5" fill="#e8e8e8"/><path d="M13 10 L19 5.5 V15Z" fill="url(#g3)"/><circle cx="2.5" cy="7" r="1.2" fill="#444"/></svg>
<svg style="left:500px;top:251px;" width="18" height="18" viewBox="0 0 18 18"><defs><linearGradient id="g4" x1="0" y1="0" x2="0" y2="1"><stop offset="0" stop-color="#f2f2f2"/><stop offset="1" stop-color="#bdbdbd"/></linearGradient></defs><path d="M1 17 L17 1" stroke="#cfcfcf" stroke-width="1"/></svg>
<svg style="left:500px;top:281px;" width="18" height="18" viewBox="0 0 18 18"><defs><linearGradient id="g5" x1="0" y1="0" x2="0" y2="1"><stop offset="0" stop-color="#f2f2f2"/><stop offset="1" stop-color="#bdbdbd"/></linearGradient></defs><path d="M1 1 H17 V4.5 H11 V17 H7 V4.5 H1Z" fill="url(#g5)"/></svg>
<svg style="left:500px;top:311px;" width="18" height="18" viewBox="0 0 18 18"><defs><linearGradient id="g6" x1="0" y1="0" x2="0" y2="1"><stop offset="0" stop-color="#f2f2f2"/><stop offset="1" stop-color="#bdbdbd"/></linearGradient></defs><path d="M1 1 L8.5 7 L4 8 L1 12Z" fill="#e0e0e0"/><path d="M7 2 L13.5 0.5 L16 16 L0.5 16" fill="none" stroke="#cfcfcf" stroke-width="0.9" stroke-dasharray="4 2"/><rect x="12.5" y="-0.5" width="2" height="2" fill="#eee"/><rect x="15" y="15" width="2" height="2" fill="#eee"/><rect x="-0.5" y="15" width="2" height="2" fill="#eee"/></svg>
<svg style="left:500px;top:341px;" width="18" height="18" viewBox="0 0 18 18"><defs><linearGradient id="g7" x1="0" y1="0" x2="0" y2="1"><stop offset="0" stop-color="#f2f2f2"/><stop offset="1" stop-color="#bdbdbd"/></linearGradient></defs><rect x="2" y="2" width="14" height="14" fill="url(#g7)"/></svg>
<svg style="left:500px;top:371px;" width="18" height="18" viewBox="0 0 18 18"><defs><linearGradient id="g8" x1="0" y1="0" x2="0" y2="1"><stop offset="0" stop-color="#f2f2f2"/><stop offset="1" stop-color="#bdbdbd"/></linearGradient></defs><circle cx="9" cy="9" r="8" fill="url(#g8)"/></svg>
<svg style="left:500px;top:401px;" width="18" height="18" viewBox="0 0 18 18"><defs><linearGradient id="g9" x1="0" y1="0" x2="0" y2="1"><stop offset="0" stop-color="#f2f2f2"/><stop offset="1" stop-color="#bdbdbd"/></linearGradient></defs><path d="M9 1 L17 7 L14 16 H4 L1 7Z" fill="url(#g9)"/></svg>
<svg style="left:500px;top:431px;" width="18" height="18" viewBox="0 0 18 18"><defs><linearGradient id="g10" x1="0" y1="0" x2="0" y2="1"><stop offset="0" stop-color="#f2f2f2"/><stop offset="1" stop-color="#bdbdbd"/></linearGradient></defs><path d="M9 0.5 L11.2 6.5 L17.5 6.8 L12.5 10.7 L14.3 16.8 L9 13.2 L3.7 16.8 L5.5 10.7 L0.5 6.8 L6.8 6.5Z" fill="url(#g10)"/></svg>
<svg style="left:500px;top:461px;" width="18" height="18" viewBox="0 0 18 18"><defs><linearGradient id="g11" x1="0" y1="0" x2="0" y2="1"><stop offset="0" stop-color="#f2f2f2"/><stop offset="1" stop-color="#bdbdbd"/></linearGradient></defs><path d="M15 9 A6.5 6.5 0 1 0 9 15.5" fill="none" stroke="url(#g11)" stroke-width="3"/></svg>
<svg style="left:500px;top:491px;" width="18" height="18" viewBox="0 0 18 18"><defs><linearGradient id="g12" x1="0" y1="0" x2="0" y2="1"><stop offset="0" stop-color="#f2f2f2"/><stop offset="1" stop-color="#bdbdbd"/></linearGradient></defs><path d="M9 1 Q10 8 17 9 Q10 10 9 17 Q8 10 1 9 Q8 8 9 1Z" fill="url(#g12)"/></svg>
<svg style="left:500px;top:521px;" width="18" height="18" viewBox="0 0 18 18"><defs><linearGradient id="g13" x1="0" y1="0" x2="0" y2="1"><stop offset="0" stop-color="#f2f2f2"/><stop offset="1" stop-color="#bdbdbd"/></linearGradient></defs><circle cx="9" cy="9" r="5" fill="none" stroke="#e6e6e6" stroke-width="3.5"/><rect x="7.5" y="0.5" width="3" height="4" fill="#e6e6e6" transform="rotate(0 9 9)"/><rect x="7.5" y="0.5" width="3" height="4" fill="#e6e6e6" transform="rotate(45 9 9)"/><rect x="7.5" y="0.5" width="3" height="4" fill="#e6e6e6" transform="rotate(90 9 9)"/><rect x="7.5" y="0.5" width="3" height="4" fill="#e6e6e6" transform="rotate(135 9 9)"/><rect x="7.5" y="0.5" width="3" height="4" fill="#e6e6e6" transform="rotate(180 9 9)"/><rect x="7.5" y="0.5" width="3" height="4" fill="#e6e6e6" transform="rotate(225 9 9)"/><rect x="7.5" y="0.5" width="3" height="4" fill="#e6e6e6" transform="rotate(270 9 9)"/><rect x="7.5" y="0.5" width="3" height="4" fill="#e6e6e6" transform="rotate(315 9 9)"/></svg>
<svg style="left:501px;top:564px;" width="16" height="12" viewBox="0 0 16 12"><path d="M2 1 L7 6 L2 11 M8 1 L13 6 L8 11" fill="none" stroke="#aaa" stroke-width="1.2"/></svg>
<div class="a" style="left:530px;top:85px;width:1057px;height:22px;background:#1c1c1c;"></div>
<div class="a" style="left:530px;top:85px;width:87px;height:22px;background:#3c3c3c;border-radius:4px 4px 0 0"></div>
<div class="t" style="left:535px;top:90px;color:#e6e6e6;font-size:12px;">Composition 3</div>
<div class="a" style="left:530px;top:107px;width:1057px;height:451px;background:#000;"></div>
<div class="a" style="left:694px;top:127px;width:728px;height:410px;background:#00aeff;"></div>
<div class="a" style="left:973px;top:303px;width:58px;height:58px;background:#569ffc;border-radius:50%;border:1px solid #6a8af0"></div>
<div class="t" style="left:802px;width:400px;text-align:center;top:325px;color:#f4f4f4;font-size:17px;letter-spacing:-0.5px">14</div>
<div class="t" style="left:569px;top:460px;color:#f0f0f0">Hold S <span style="color:#505050;mix-blend-mode:difference">Direct Layer Selection</span></div>
<div class="t" style="left:569px;top:474px;color:#f0f0f0">Space <span style="color:#505050;mix-blend-mode:difference">Play/ Stop</span></div>
<div class="t" style="left:569px;top:488px;color:#f0f0f0">Space + click + drag <span style="color:#505050;mix-blend-mode:difference">Pan</span></div>
<div class="t" style="left:569px;top:502px;color:#f0f0f0">Alt + click + drag <span style="color:#505050;mix-blend-mode:difference">Move Pivot Point</span></div>
<div class="t" style="left:569px;top:516px;color:#f0f0f0">Shift <span style="color:#505050;mix-blend-mode:difference">Enable Snapping</span></div>
<div class="t" style="left:998px;top:536px;color:#f4f4f4;font-size:12px;">Viewport Quality: High</div>
<div class="a" style="left:530px;top:558px;width:1057px;height:22px;background:#474747;"></div>
<div class="a" style="left:535px;top:561px;width:78px;height:16px;background:#2a2a2a;border-radius:3px"></div>
<div class="t" style="left:538px;top:563px;color:#dcdcdc;font-size:12px;">38%</div>
<svg style="left:598px;top:566px;" width="10" height="6" viewBox="0 0 10 6"><path d="M0.5 0.5 L5 5 L9.5 0.5" fill="none" stroke="#ccc" stroke-width="1"/></svg>
<div class="a" style="left:866px;top:560px;width:100px;height:19px;background:#383838;border-radius:4px;border:1px solid #2a2a2a"></div>
<div class="a" style="left:886px;top:561px;width:1px;height:17px;background:#2a2a2a;"></div>
<div class="a" style="left:906px;top:561px;width:1px;height:17px;background:#2a2a2a;"></div>
<div class="a" style="left:926px;top:561px;width:1px;height:17px;background:#2a2a2a;"></div>
<div class="a" style="left:946px;top:561px;width:1px;height:17px;background:#2a2a2a;"></div>
<svg style="left:867px;top:561px;" width="18" height="17" viewBox="0 0 18 17"><rect x="3" y="3" width="2" height="11" fill="#ddd"/><path d="M15 3 V14 L6 8.5Z" fill="#ddd"/></svg>
<svg style="left:887px;top:561px;" width="18" height="17" viewBox="0 0 18 17"><path d="M11 3 V14 L3 8.5Z" fill="#ddd"/><rect x="13" y="3" width="2" height="11" fill="#ddd"/></svg>
<svg style="left:907px;top:561px;" width="18" height="17" viewBox="0 0 18 17"><path d="M6 3 V14 L15 8.5Z" fill="#ddd"/></svg>
<svg style="left:927px;top:561px;" width="18" height="17" viewBox="0 0 18 17"><rect x="3" y="3" width="2" height="11" fill="#ddd"/><path d="M7 3 V14 L15 8.5Z" fill="#ddd"/></svg>
<svg style="left:947px;top:561px;" width="18" height="17" viewBox="0 0 18 17"><path d="M3 3 V14 L12 8.5Z" fill="#ddd"/><rect x="13" y="3" width="2" height="11" fill="#ddd"/></svg>
<div class="a" style="left:971px;top:560px;width:20px;height:19px;background:#383838;border-radius:4px;border:1px solid #2a2a2a"></div>
<svg style="left:972px;top:561px;" width="18" height="17" viewBox="0 0 18 17"><path d="M4 6 H14 V13 H4Z M4 13" fill="none" stroke="#ddd" stroke-width="1.3"/><path d="M11 3 L15 6 L11 9Z" fill="#ddd"/></svg>
<div class="a" style="left:1232px;top:560px;width:37px;height:19px;background:#3a3a3a;border-radius:4px"></div>
<svg style="left:1233px;top:563px;" width="16" height="12" viewBox="0 0 16 12"><path d="M4 1 H15 V11 H4 L0.5 6Z" fill="#ddd"/><circle cx="5" cy="6" r="1.6" fill="#333"/></svg>
<div class="t" style="left:1257px;top:563px;color:#8fa8c8;font-size:13px;">0</div>
<div class="a" style="left:1272px;top:560px;width:32px;height:19px;background:#383838;border-radius:4px;border:1px solid #2a2a2a"></div>
<svg style="left:1273px;top:561px;" width="18" height="17" viewBox="0 0 18 17"><path d="M2 6 H5 L9 2 V14 L5 10 H2Z" fill="#35c964"/><path d="M11 5 Q13 8 11 11 M13 3 Q16 8 13 13" fill="none" stroke="#35c964" stroke-width="1.3"/></svg>
<div class="a" style="left:1290px;top:562px;width:1px;height:15px;background:#2a2a2a;"></div>
<svg style="left:1292px;top:565px;" width="10" height="10" viewBox="0 0 10 10"><path d="M2 1 L8 5 L2 9Z" fill="none" stroke="#999" stroke-width="1"/></svg>
<div class="a" style="left:1307px;top:560px;width:32px;height:19px;background:#383838;border-radius:4px;border:1px solid #2a2a2a"></div>
<svg style="left:1308px;top:561px;" width="18" height="17" viewBox="0 0 18 17"><g transform="rotate(-40 8.5 8.5)"><path d="M4.5 13.5 V8.5 A4 4 0 0 1 12.5 8.5 V13.5" fill="none" stroke="#d8d8d8" stroke-width="2"/></g></svg>
<div class="a" style="left:1325px;top:562px;width:1px;height:15px;background:#2a2a2a;"></div>
<svg style="left:1327px;top:565px;" width="10" height="10" viewBox="0 0 10 10"><path d="M2 1 L8 5 L2 9Z" fill="none" stroke="#999" stroke-width="1"/></svg>
<div class="a" style="left:1342px;top:560px;width:32px;height:19px;background:#383838;border-radius:4px;border:1px solid #2a2a2a"></div>
<svg style="left:1343px;top:561px;" width="18" height="17" viewBox="0 0 18 17"><path d="M5.5 1 V16 M11.5 1 V16 M1 5.5 H17 M1 11.5 H17" stroke="#e0e0e0" stroke-width="1.1"/></svg>
<div class="a" style="left:1360px;top:562px;width:1px;height:15px;background:#2a2a2a;"></div>
<svg style="left:1362px;top:565px;" width="10" height="10" viewBox="0 0 10 10"><path d="M2 1 L8 5 L2 9Z" fill="none" stroke="#999" stroke-width="1"/></svg>
<div class="a" style="left:1377px;top:560px;width:20px;height:19px;background:#383838;border-radius:4px;border:1px solid #2a2a2a"></div>
<svg style="left:1378px;top:561px;" width="18" height="17" viewBox="0 0 18 17"><rect x="1" y="3" width="4" height="3" fill="#35c964"/><rect x="1" y="8" width="4" height="6" fill="#35c964"/><rect x="7" y="3" width="10" height="6" fill="none" stroke="#35c964" stroke-width="1.5"/><rect x="7" y="11" width="10" height="3" fill="#35c964"/></svg>
<div class="a" style="left:1400px;top:560px;width:20px;height:19px;background:#383838;border-radius:4px;border:1px solid #2a2a2a"></div>
<svg style="left:1401px;top:561px;" width="18" height="17" viewBox="0 0 18 17"><path d="M2 4 L6 8.5 L2 13 M7 4 L11 8.5 L7 13 M12 4 L16 8.5 L12 13" fill="none" stroke="#ddd" stroke-width="1.6"/></svg>
<div class="a" style="left:1423px;top:560px;width:32px;height:19px;background:#383838;border-radius:4px;border:1px solid #2a2a2a"></div>
<svg style="left:1424px;top:561px;" width="18" height="17" viewBox="0 0 18 17"><rect x="2" y="3" width="13" height="10" fill="none" stroke="#ddd" stroke-width="1.2"/><rect x="2" y="12" width="13" height="2" fill="#ddd"/></svg>
<div class="a" style="left:1441px;top:562px;width:1px;height:15px;background:#2a2a2a;"></div>
<svg style="left:1443px;top:565px;" width="10" height="10" viewBox="0 0 10 10"><path d="M2 1 L8 5 L2 9Z" fill="none" stroke="#999" stroke-width="1"/></svg>
<div class="a" style="left:1458px;top:560px;width:32px;height:19px;background:#383838;border-radius:4px;border:1px solid #2a2a2a"></div>
<svg style="left:1459px;top:561px;" width="18" height="17" viewBox="0 0 18 17"><rect x="2" y="2" width="8" height="5" fill="none" stroke="#ccc" stroke-width="1"/><path d="M4 9 H12 V4 M6 11 H14 V6 M8 13 H16 V8" fill="none" stroke="#999" stroke-width="1"/></svg>
<div class="a" style="left:1476px;top:562px;width:1px;height:15px;background:#2a2a2a;"></div>
<svg style="left:1478px;top:565px;" width="10" height="10" viewBox="0 0 10 10"><path d="M2 1 L8 5 L2 9Z" fill="none" stroke="#999" stroke-width="1"/></svg>
<div class="a" style="left:1493px;top:560px;width:32px;height:19px;background:#383838;border-radius:4px;border:1px solid #2a2a2a"></div>
<svg style="left:1494px;top:561px;" width="18" height="17" viewBox="0 0 18 17"><rect x="2" y="2" width="8" height="8" fill="#bbb"/><rect x="6.5" y="6.5" width="8" height="8" fill="#333" stroke="#ddd" stroke-width="1.2"/></svg>
<div class="a" style="left:1511px;top:562px;width:1px;height:15px;background:#2a2a2a;"></div>
<svg style="left:1513px;top:565px;" width="10" height="10" viewBox="0 0 10 10"><path d="M2 1 L8 5 L2 9Z" fill="none" stroke="#999" stroke-width="1"/></svg>
<div class="a" style="left:1528px;top:560px;width:32px;height:19px;background:#383838;border-radius:4px;border:1px solid #2a2a2a"></div>
<svg style="left:1529px;top:561px;" width="18" height="17" viewBox="0 0 18 17"><path d="M2 2h3v3h-3zM8 2h3v3h-3zM5 5h3v3h-3zM11 5h3v3h-3zM2 8h3v3h-3zM8 8h3v3h-3zM5 11h3v3h-3zM11 11h3v3h-3z" fill="#35c964"/></svg>
<div class="a" style="left:1546px;top:562px;width:1px;height:15px;background:#2a2a2a;"></div>
<svg style="left:1548px;top:565px;" width="10" height="10" viewBox="0 0 10 10"><path d="M2 1 L8 5 L2 9Z" fill="none" stroke="#999" stroke-width="1"/></svg>
<div class="a" style="left:1563px;top:560px;width:20px;height:19px;background:#383838;border-radius:4px;border:1px solid #2a2a2a"></div>
<svg style="left:1564px;top:561px;" width="18" height="17" viewBox="0 0 18 17"><circle cx="9" cy="8.5" r="4" fill="none" stroke="#ddd" stroke-width="3"/><rect x="7.7" y="1" width="2.6" height="3" fill="#ddd" transform="rotate(0 9 8.5)"/><rect x="7.7" y="1" width="2.6" height="3" fill="#ddd" transform="rotate(45 9 8.5)"/><rect x="7.7" y="1" width="2.6" height="3" fill="#ddd" transform="rotate(90 9 8.5)"/><rect x="7.7" y="1" width="2.6" height="3" fill="#ddd" transform="rotate(135 9 8.5)"/><rect x="7.7" y="1" width="2.6" height="3" fill="#ddd" transform="rotate(180 9 8.5)"/><rect x="7.7" y="1" width="2.6" height="3" fill="#ddd" transform="rotate(225 9 8.5)"/><rect x="7.7" y="1" width="2.6" height="3" fill="#ddd" transform="rotate(270 9 8.5)"/><rect x="7.7" y="1" width="2.6" height="3" fill="#ddd" transform="rotate(315 9 8.5)"/></svg>
<div class="a" style="left:1593px;top:85px;width:321px;height:22px;background:#1c1c1c;"></div>
<div class="a" style="left:1593px;top:85px;width:40px;height:22px;background:#454545;border-radius:4px 4px 0 0"></div>
<div class="t" style="left:1598px;top:90px;color:#e6e6e6;font-size:12px;">Color</div>
<div class="a" style="left:1634px;top:85px;width:70px;height:22px;background:#262626;border-radius:4px 4px 0 0"></div>
<div class="t" style="left:1639px;top:90px;color:#e6e6e6;font-size:12px;">Add Layers</div>
<div class="a" style="left:1593px;top:107px;width:321px;height:377px;background:#454545;"></div>
<div class="a" style="left:1900px;top:107px;width:14px;height:377px;background:#2a2a2a;"></div>
<div class="a" style="left:1902px;top:153px;width:10px;height:302px;background:#4a4a4a;border-radius:5px"></div>
<div class="a" style="left:1593px;top:107px;width:307px;height:160px;overflow:hidden"><div class="a" style="left:53px;top:-48px;width:200px;height:200px;border-radius:50%;background:conic-gradient(from 0deg, hsl(90,100%,50%), hsl(60,100%,50%) 30deg, hsl(30,100%,50%) 60deg, hsl(0,100%,50%) 90deg, hsl(330,100%,50%) 120deg, hsl(300,100%,50%) 150deg, hsl(270,100%,50%) 180deg, hsl(240,100%,50%) 210deg, hsl(210,100%,50%) 240deg, hsl(180,100%,50%) 270deg, hsl(150,100%,50%) 300deg, hsl(120,100%,50%) 330deg, hsl(90,100%,50%) 360deg)"></div><div class="a" style="left:78px;top:-23px;width:150px;height:150px;border-radius:50%;background:#454545"></div></div>
<div class="a" style="left:1702px;top:116px;width:90px;height:90px;background:#000;background:linear-gradient(to right,#000,rgba(0,0,0,0)),linear-gradient(to bottom,#fff,#f070c8 55%,#e0109a)"></div>
<svg style="left:1784px;top:171px;" width="14" height="14" viewBox="0 0 14 14"><circle cx="7" cy="7" r="5.5" fill="none" stroke="#f4f4f4" stroke-width="1.2"/></svg>
<svg style="left:1806px;top:207px;" width="14" height="14" viewBox="0 0 14 14"><circle cx="7" cy="7" r="5.5" fill="none" stroke="#f4f4f4" stroke-width="1.2"/></svg>
<div class="a" style="left:1600px;top:273px;width:22px;height:22px;background:#fd4fbf;border-radius:3px"></div>
<div class="t" style="left:1625px;top:278px;color:#e6e6e6;font-size:12px;">Hot Pink</div>
<div class="a" style="left:1870px;top:273px;width:22px;height:22px;background:#2c2c2c;border-radius:4px;border:1px solid #222"></div>
<svg style="left:1874px;top:277px;" width="14" height="14" viewBox="0 0 14 14"><path d="M2 12 L8 6" stroke="#ccc" stroke-width="1.4"/><path d="M7 4 L10 7 M9 2 L12 5" stroke="#ddd" stroke-width="2.2"/></svg>
<div class="a" style="left:1600px;top:300px;width:49px;height:19px;background:#474747;border-radius:3px;border:1px solid #2e2e2e"></div>
<div class="t" style="left:1603px;top:303px;color:#e6e6e6;font-size:12px;">Hex</div>
<svg style="left:1634px;top:306px;" width="10" height="6" viewBox="0 0 10 6"><path d="M0.5 0.5 L5 5 L9.5 0.5" fill="none" stroke="#ccc" stroke-width="1"/></svg>
<div class="a" style="left:1653px;top:298px;width:240px;height:22px;background:#2a2a2a;border-radius:3px"></div>
<div class="t" style="left:1658px;top:303px;color:#555;font-size:11px;">#</div>
<div class="t" style="left:1670px;top:303px;color:#e6e6e6;font-size:12px;">fd4fbf</div>
<div class="a" style="left:1600px;top:330px;width:236px;height:5px;background:#e8e8e8;border-radius:3px"></div>
<div class="a" style="left:1827px;top:326px;width:12px;height:12px;background:#6cc0a0;border-radius:50%;border:2px solid #4c9c80"></div>
<div class="a" style="left:1849px;top:323px;width:44px;height:18px;background:#2a2a2a;border-radius:3px"></div>
<div class="t" style="left:1855px;top:326px;color:#555;font-size:13px;">A</div>
<div class="t" style="left:1866px;top:326px;color:#e6e6e6;font-size:12px;">255</div>
<div class="a" style="left:1597px;top:346px;width:299px;height:22px;background:#262626;"></div>
<div class="a" style="left:1599px;top:348px;width:148px;height:20px;background:#454545;border-radius:4px 4px 0 0"></div>
<div class="t" style="left:1473px;width:400px;text-align:center;top:351px;color:#e6e6e6;font-size:12px;">Swatches</div>
<div class="t" style="left:1620px;width:400px;text-align:center;top:351px;color:#b8b8b8;font-size:12px;">Generator</div>
<div class="a" style="left:1599px;top:371px;width:256px;height:19px;background:#5a5a5a;border-radius:4px"></div>
<div class="a" style="left:1600px;top:372px;width:61px;height:17px;background:#262626;border-radius:3px"></div>
<svg style="left:1605px;top:374px;" width="12" height="12" viewBox="0 0 12 12"><path d="M1.5 1 V11 M4.5 1 V11 M7 1 L10 11" stroke="#35c964" stroke-width="1.6"/></svg>
<div class="t" style="left:1621px;top:374px;color:#e6e6e6;font-size:12px;">Library</div>
<svg style="left:1670px;top:374px;" width="12" height="12" viewBox="0 0 12 12"><rect x="1" y="3" width="10" height="8" fill="#ccc"/><rect x="1" y="1" width="4" height="2" fill="#ccc"/><path d="M3 6 H9 M3 8 H9" stroke="#555" stroke-width="1"/></svg>
<div class="t" style="left:1686px;top:374px;color:#e6e6e6;font-size:12px;">Project</div>
<svg style="left:1738px;top:373px;" width="10" height="13" viewBox="0 0 10 13"><path d="M1 1 H6 L9 4 V12 H1Z" fill="none" stroke="#ccc" stroke-width="1"/></svg>
<div class="t" style="left:1752px;top:374px;color:#e6e6e6;font-size:12px;">Scene</div>
<svg style="left:1799px;top:373px;" width="13" height="13" viewBox="0 0 13 13"><path d="M6 1.5 A5 5 0 1 0 11 7 L11 1.5Z" fill="none" stroke="#ccc" stroke-width="1.2"/></svg>
<div class="t" style="left:1816px;top:374px;color:#e6e6e6;font-size:12px;">Labels</div>
<div class="a" style="left:1858px;top:371px;width:37px;height:19px;background:#5a5a5a;border-radius:4px"></div>
<div class="a" style="left:1859px;top:372px;width:17px;height:17px;background:#262626;border-radius:3px"></div>
<svg style="left:1862px;top:375px;" width="11" height="11" viewBox="0 0 11 11"><rect x="1" y="1" width="3.5" height="3.5" fill="#35c964"/><rect x="6.5" y="1" width="3.5" height="3.5" fill="#35c964"/><rect x="1" y="6.5" width="3.5" height="3.5" fill="#35c964"/><rect x="6.5" y="6.5" width="3.5" height="3.5" fill="#35c964"/></svg>
<svg style="left:1880px;top:375px;" width="12" height="11" viewBox="0 0 12 11"><path d="M0 1.5 H12 M0 5.5 H12 M0 9.5 H12" stroke="#ddd" stroke-width="1.2"/></svg>
<div class="a" style="left:1599px;top:393px;width:275px;height:17px;background:#555555;border-radius:3px"></div>
<div class="t" style="left:1601px;top:395px;color:#e6e6e6;font-size:12px;">new</div>
<svg style="left:1860px;top:398px;" width="10" height="6" viewBox="0 0 10 6"><path d="M0.5 0.5 L5 5 L9.5 0.5" fill="none" stroke="#ccc" stroke-width="1"/></svg>
<div class="a" style="left:1880px;top:400px;width:2px;height:2px;background:#ddd;"></div>
<div class="a" style="left:1885px;top:400px;width:2px;height:2px;background:#ddd;"></div>
<div class="a" style="left:1890px;top:400px;width:2px;height:2px;background:#ddd;"></div>
<div class="a" style="left:1598px;top:410px;width:297px;height:74px;background:#282828;"></div>
<div class="a" style="left:1600px;top:412px;width:18px;height:18px;background:#8d4af5;border-radius:3px"></div>
<div class="a" style="left:1622px;top:412px;width:18px;height:18px;background:#4a9cf5;border-radius:3px"></div>
<div class="a" style="left:1644px;top:412px;width:18px;height:18px;background:#ff744a;border-radius:3px"></div>
<div class="a" style="left:1666px;top:412px;width:18px;height:18px;background:#48f0a8;border-radius:3px"></div>
<div class="a" style="left:1688px;top:412px;width:18px;height:18px;background:#ff4a5c;border-radius:3px"></div>
<div class="a" style="left:1710px;top:412px;width:18px;height:18px;background:#ff48c4;border-radius:3px"></div>
<div class="a" style="left:1593px;top:490px;width:321px;height:22px;background:#1c1c1c;"></div>
<div class="a" style="left:1593px;top:490px;width:38px;height:22px;background:#454545;border-radius:4px 4px 0 0"></div>
<div class="t" style="left:1597px;top:495px;color:#e6e6e6;font-size:12px;">Align</div>
<div class="a" style="left:1593px;top:512px;width:321px;height:68px;background:#454545;"></div>
<div class="t" style="left:1601px;top:525px;color:#e6e6e6;font-size:12px;">Alignment</div>
<div class="t" style="left:1601px;top:553px;color:#e6e6e6;font-size:12px;">Distribution</div>
<div class="a" style="left:1791px;top:522px;width:53px;height:17px;background:#222;border-radius:5px"></div>
<div class="a" style="left:1791px;top:522px;width:17px;height:17px;background:#2c2c2c;border-radius:4px;border-top:1px solid #4a4a4a"></div>
<svg style="left:1792px;top:523px;" width="16" height="16" viewBox="0 0 16 16"><rect x="2" y="2" width="1" height="12" fill="#e2e2e2"/><rect x="4" y="5" width="6" height="2" fill="#e2e2e2"/><rect x="4" y="10" width="9" height="2" fill="#e2e2e2"/></svg>
<div class="a" style="left:1809px;top:522px;width:17px;height:17px;background:#2c2c2c;border-radius:4px;border-top:1px solid #4a4a4a"></div>
<svg style="left:1810px;top:523px;" width="16" height="16" viewBox="0 0 16 16"><rect x="7.5" y="1" width="1" height="14" fill="#e2e2e2"/><rect x="4" y="5" width="8" height="2" fill="#e2e2e2"/><rect x="2" y="10" width="11" height="2" fill="#e2e2e2"/></svg>
<div class="a" style="left:1827px;top:522px;width:17px;height:17px;background:#2c2c2c;border-radius:4px;border-top:1px solid #4a4a4a"></div>
<svg style="left:1828px;top:523px;" width="16" height="16" viewBox="0 0 16 16"><rect x="13" y="2" width="1" height="12" fill="#e2e2e2"/><rect x="6" y="5" width="6" height="2" fill="#e2e2e2"/><rect x="3" y="10" width="9" height="2" fill="#e2e2e2"/></svg>
<div class="a" style="left:1852px;top:522px;width:53px;height:17px;background:#222;border-radius:5px"></div>
<div class="a" style="left:1852px;top:522px;width:17px;height:17px;background:#2c2c2c;border-radius:4px;border-top:1px solid #4a4a4a"></div>
<svg style="left:1853px;top:523px;" width="16" height="16" viewBox="0 0 16 16"><rect x="2" y="2" width="12" height="1" fill="#e2e2e2"/><rect x="5" y="4" width="2" height="10" fill="#e2e2e2"/><rect x="9" y="4" width="2" height="6" fill="#e2e2e2"/></svg>
<div class="a" style="left:1870px;top:522px;width:17px;height:17px;background:#2c2c2c;border-radius:4px;border-top:1px solid #4a4a4a"></div>
<svg style="left:1871px;top:523px;" width="16" height="16" viewBox="0 0 16 16"><rect x="1" y="8" width="14" height="1" fill="#e2e2e2"/><rect x="4" y="2" width="2" height="12" fill="#e2e2e2"/><rect x="9" y="4" width="2" height="7" fill="#e2e2e2"/></svg>
<div class="a" style="left:1888px;top:522px;width:17px;height:17px;background:#2c2c2c;border-radius:4px;border-top:1px solid #4a4a4a"></div>
<svg style="left:1889px;top:523px;" width="16" height="16" viewBox="0 0 16 16"><rect x="2" y="13" width="12" height="1" fill="#e2e2e2"/><rect x="5" y="5" width="2" height="7" fill="#e2e2e2"/><rect x="10" y="1" width="2" height="11" fill="#e2e2e2"/></svg>
<div class="a" style="left:1791px;top:550px;width:53px;height:17px;background:#222;border-radius:5px"></div>
<div class="a" style="left:1791px;top:550px;width:17px;height:17px;background:#2c2c2c;border-radius:4px;border-top:1px solid #4a4a4a"></div>
<svg style="left:1792px;top:551px;" width="16" height="16" viewBox="0 0 16 16"><rect x="2" y="1" width="1" height="14" fill="#e2e2e2"/><rect x="13" y="1" width="1" height="14" fill="#e2e2e2"/><rect x="6.5" y="4" width="2" height="8" fill="#e2e2e2"/></svg>
<div class="a" style="left:1809px;top:550px;width:17px;height:17px;background:#2c2c2c;border-radius:4px;border-top:1px solid #4a4a4a"></div>
<svg style="left:1810px;top:551px;" width="16" height="16" viewBox="0 0 16 16"><rect x="1" y="2" width="13" height="1" fill="#e2e2e2"/><rect x="1" y="13" width="13" height="1" fill="#e2e2e2"/><rect x="4" y="7" width="7" height="2" fill="#e2e2e2"/></svg>
<div class="a" style="left:1827px;top:550px;width:17px;height:17px;background:#2c2c2c;border-radius:4px;border-top:1px solid #4a4a4a"></div>
<svg style="left:1828px;top:551px;" width="16" height="16" viewBox="0 0 16 16"><path d="M1 4 V1 H4 M12 1 H15 V4 M15 12 V15 H12 M4 15 H1 V12" fill="none" stroke="#e2e2e2" stroke-width="1"/><rect x="3" y="8" width="2" height="4" fill="#e2e2e2"/><rect x="7" y="6" width="2" height="4" fill="#e2e2e2"/><rect x="11" y="3" width="2" height="4" fill="#e2e2e2"/></svg>
<div class="a" style="left:494px;top:586px;width:1420px;height:22px;background:#1c1c1c;"></div>
<div class="a" style="left:494px;top:586px;width:89px;height:22px;background:#3c3c3c;border-radius:4px 4px 0 0"></div>
<div class="t" style="left:499px;top:591px;color:#e6e6e6;font-size:12px;">Scene Window</div>
<div class="a" style="left:585px;top:586px;width:99px;height:22px;background:#262626;border-radius:4px 4px 0 0"></div>
<div class="t" style="left:589px;top:591px;color:#e6e6e6;font-size:12px;">JavaScript Editor</div>
<div class="a" style="left:686px;top:586px;width:112px;height:22px;background:#262626;border-radius:4px 4px 0 0"></div>
<div class="t" style="left:690px;top:591px;color:#e6e6e6;font-size:12px;">Dependency Graph</div>
<div class="a" style="left:494px;top:608px;width:1420px;height:22px;background:#272727;"></div>
<div class="t" style="left:523px;width:400px;text-align:center;top:613px;color:#a8a8a8;font-size:12px;">Composition 1</div>
<svg style="left:950px;top:615px;" width="10" height="10" viewBox="0 0 10 10"><path d="M1 1 L9 9 M9 1 L1 9" stroke="#bbb" stroke-width="1"/></svg>
<div class="a" style="left:969px;top:614px;width:1px;height:11px;background:#aaa;"></div>
<div class="t" style="left:993px;width:400px;text-align:center;top:613px;color:#a8a8a8;font-size:12px;">Composition 2</div>
<svg style="left:1421px;top:615px;" width="10" height="10" viewBox="0 0 10 10"><path d="M1 1 L9 9 M9 1 L1 9" stroke="#bbb" stroke-width="1"/></svg>
<div class="a" style="left:1440px;top:610px;width:469px;height:20px;background:#434343;border-radius:4px 4px 0 0"></div>
<div class="t" style="left:1463px;width:400px;text-align:center;top:613px;color:#e6e6e6;font-size:12px;">Composition 3</div>
<svg style="left:1891px;top:615px;" width="10" height="10" viewBox="0 0 10 10"><path d="M1 1 L9 9 M9 1 L1 9" stroke="#ccc" stroke-width="1"/></svg>
<div class="a" style="left:494px;top:630px;width:490px;height:368px;background:#2a2a2a;"></div>
<div class="a" style="left:494px;top:630px;width:490px;height:22px;background:#3e3e3e;"></div>
<div class="a" style="left:497px;top:633px;width:277px;height:19px;background:#262626;border-radius:10px"></div>
<svg style="left:500px;top:636px;" width="14" height="14" viewBox="0 0 14 14"><circle cx="5.5" cy="5.5" r="4.3" fill="none" stroke="#d6d6d6" stroke-width="1.2"/><path d="M8.6 8.6 L12 12" stroke="#d6d6d6" stroke-width="1.8"/></svg>
<div class="t" style="left:520px;top:636px;color:#8c8c8c;font-size:12px;">Enter a layer name</div>
<div class="a" style="left:778px;top:633px;width:20px;height:19px;background:#2c2c2c;border-radius:4px;border:1px solid #222"></div>
<svg style="left:781px;top:636px;" width="14" height="13" viewBox="0 0 14 13"><path d="M7 1.5 V11.5 M2 6.5 H12" stroke="#eee" stroke-width="2"/></svg>
<div class="a" style="left:822px;top:633px;width:20px;height:19px;background:#2c2c2c;border-radius:4px;border:1px solid #222"></div>
<div class="a" style="left:844px;top:633px;width:20px;height:19px;background:#2c2c2c;border-radius:4px;border:1px solid #222"></div>
<div class="a" style="left:866px;top:633px;width:20px;height:19px;background:#2c2c2c;border-radius:4px;border:1px solid #222"></div>
<svg style="left:824px;top:635px;" width="16" height="16" viewBox="0 0 16 16"><circle cx="11" cy="5" r="3.6" fill="#ddd"/><path d="M4 13 A6 6 0 0 1 9 4" fill="none" stroke="#666" stroke-width="1.3"/><path d="M3 11 A6 6 0 0 1 7 5" fill="none" stroke="#555" stroke-width="1.3"/></svg>
<svg style="left:846px;top:635px;" width="16" height="16" viewBox="0 0 16 16"><circle cx="3" cy="3" r="1" fill="#ccc"/><circle cx="9" cy="3" r="1" fill="#ccc"/><circle cx="3" cy="8" r="1" fill="#ccc"/><path d="M9 6 L10 9 L13 10 L10 11 L9 14 L8 11 L5 10 L8 9Z" fill="#eee"/></svg>
<svg style="left:868px;top:635px;" width="16" height="16" viewBox="0 0 16 16"><path d="M1 3 H4 M7 3 H15 M1 8 H8 M11 8 H15 M1 13 H4 M7 13 H15" stroke="#ddd" stroke-width="1.1"/><circle cx="5.5" cy="3" r="1.5" fill="none" stroke="#ddd"/><circle cx="9.5" cy="8" r="1.5" fill="none" stroke="#ddd"/><circle cx="5.5" cy="13" r="1.5" fill="none" stroke="#ddd"/></svg>
<div class="a" style="left:888px;top:633px;width:94px;height:19px;background:#282828;border-radius:3px"></div>
<div class="t" style="left:893px;top:636px;color:#555;font-size:12px;">F</div>
<div class="t" style="left:905px;top:636px;color:#e6e6e6;font-size:12px;">170</div>
<div class="a" style="left:494px;top:652px;width:490px;height:20px;background:#474747;"></div>
<svg style="left:500px;top:655px;" width="12" height="14" viewBox="0 0 12 14"><rect x="1" y="6" width="10" height="8" fill="#d0d0d0"/><path d="M3 6 V4 A3 3 0 0 1 9 4 V6" fill="none" stroke="#d0d0d0" stroke-width="1.4"/><rect x="5" y="9" width="2" height="2" fill="#555"/></svg>
<svg style="left:517px;top:657px;" width="16" height="10" viewBox="0 0 16 10"><path d="M1 5 Q8 -2 15 5 Q8 12 1 5Z" fill="none" stroke="#d0d0d0" stroke-width="1.1"/><circle cx="8" cy="5" r="2" fill="#d0d0d0"/></svg>
<svg style="left:537px;top:655px;" width="14" height="14" viewBox="0 0 14 14"><path d="M7 1 L13 4 V10 L7 13 L1 10 V4Z M1 4 L7 7 L13 4 M7 7 V13" fill="none" stroke="#d0d0d0" stroke-width="1"/></svg>
<svg style="left:555px;top:655px;" width="16" height="14" viewBox="0 0 16 14"><path d="M1 5 H4 L8 1 V13 L4 9 H1Z" fill="#d0d0d0"/><path d="M10 4 Q12 7 10 10 M12 2 Q15 7 12 12" fill="none" stroke="#d0d0d0" stroke-width="1.2"/></svg>
<svg style="left:575px;top:655px;" width="14" height="14" viewBox="0 0 14 14"><path d="M2 12 L9 5" stroke="#d0d0d0" stroke-width="1.3"/><path d="M8 3 L11 6 M10 1.5 L12.5 4" stroke="#d0d0d0" stroke-width="2"/></svg>
<svg style="left:593px;top:658px;" width="15" height="9" viewBox="0 0 15 9"><path d="M4 0.5 H14.5 V8.5 H4 L0.5 4.5Z" fill="#d0d0d0"/><circle cx="5" cy="4.5" r="1.6" fill="#555"/></svg>
<div class="t" style="left:649px;top:657px;color:#e6e6e6;font-size:12px;">Name</div>
<div class="a" style="left:494px;top:672px;width:478px;height:220px;background:#363636;"></div>
<div class="a" style="left:496px;top:674px;width:18px;height:18px;background:#2a2a2a;border-radius:2px"></div>
<div class="a" style="left:515px;top:674px;width:18px;height:18px;background:#2a2a2a;border-radius:2px"></div>
<svg style="left:518px;top:676px;" width="14" height="14" viewBox="0 0 14 14"><path d="M11.5 5.5 A5 5 0 1 1 9 2.2" fill="none" stroke="#d0d0d0" stroke-width="1.2"/><path d="M4.5 6.5 L7 9 L12 3" fill="none" stroke="#d0d0d0" stroke-width="1.4"/></svg>
<div class="a" style="left:573px;top:675px;width:16px;height:16px;background:#72e09a;border-radius:2px"></div>
<svg style="left:593px;top:679px;" width="15" height="9" viewBox="0 0 15 9"><path d="M4 0.5 H14.5 V8.5 H4 L0.5 4.5Z" fill="#d0d0d0"/><circle cx="5" cy="4.5" r="1.6" fill="#333"/></svg>
<div class="a" style="left:610px;top:674px;width:31px;height:18px;background:#2f2f2f;border-radius:2px"></div>
<div class="a" style="left:610px;top:674px;width:15px;height:18px;background:#2d2d2d;border-radius:2px"></div>
<svg style="left:613px;top:681px;" width="9" height="6" viewBox="0 0 9 6"><path d="M0.5 0.5 L4.5 4.5 L8.5 0.5" fill="none" stroke="#888" stroke-width="1"/></svg>
<svg style="left:648px;top:672px;" width="18" height="18" viewBox="0 0 18 18"><path d="M0.5 8 H5.5 V12 H9.5 V17 H0.5Z" fill="#a8d4ff"/><path d="M6 4.5 H14 M6 7.5 H14 M6 10.5 H14" stroke="#e0e0e0" stroke-width="1"/></svg>
<div class="t" style="left:667px;top:677px;color:#e6e6e6;font-size:12px;">Color Array</div>
<div class="a" style="left:930px;top:675px;width:21px;height:16px;background:#2f2f2f;border-radius:3px"></div>
<svg style="left:930px;top:679px;" width="21" height="8" viewBox="0 0 21 8"><path d="M8 0.5 V7.5 H5.5 L2.5 4 L5.5 0.5Z" fill="#8c8060"/><path d="M12.5 0.5 V7.5 H15 L18 4 L15 0.5Z" fill="#9848c0"/></svg>
<div class="a" style="left:940px;top:675px;width:1px;height:16px;background:#2a2a2a;"></div>
<svg style="left:955px;top:677px;" width="12" height="12" viewBox="0 0 12 12"><circle cx="6" cy="6" r="4.6" fill="none" stroke="#777" stroke-width="1"/></svg>
<div class="a" style="left:496px;top:696px;width:18px;height:18px;background:#2a2a2a;border-radius:2px"></div>
<div class="a" style="left:515px;top:696px;width:18px;height:18px;background:#2a2a2a;border-radius:2px"></div>
<svg style="left:518px;top:698px;" width="14" height="14" viewBox="0 0 14 14"><path d="M11.5 5.5 A5 5 0 1 1 9 2.2" fill="none" stroke="#d0d0d0" stroke-width="1.2"/><path d="M4.5 6.5 L7 9 L12 3" fill="none" stroke="#d0d0d0" stroke-width="1.4"/></svg>
<div class="a" style="left:573px;top:697px;width:16px;height:16px;background:#c8ec78;border-radius:2px"></div>
<svg style="left:593px;top:701px;" width="15" height="9" viewBox="0 0 15 9"><path d="M4 0.5 H14.5 V8.5 H4 L0.5 4.5Z" fill="#d0d0d0"/><circle cx="5" cy="4.5" r="1.6" fill="#333"/></svg>
<svg style="left:667px;top:694px;" width="18" height="18" viewBox="0 0 18 18"><path d="M1.5 7.5 L4.5 10.5 M4.5 7.5 L1.5 10.5 M2.5 14.5 L5.5 17.5 M5.5 14.5 L2.5 17.5 M9.5 13.5 L13.5 17.5 M13.5 13.5 L9.5 17.5" stroke="#8ed88e" stroke-width="1"/><rect x="10" y="7" width="2.5" height="2.5" fill="#8ed88e"/><rect x="6" y="10.5" width="2.5" height="2.5" fill="#8ed88e"/><path d="M4.5 10 L6.5 11.5 M8.5 12.5 L10.5 14" stroke="#6a9a6a" stroke-width="0.8"/></svg>
<div class="t" style="left:686px;top:699px;color:#e6e6e6;font-size:12px;">Random [Index]</div>
<div class="a" style="left:930px;top:697px;width:21px;height:16px;background:#2f2f2f;border-radius:3px"></div>
<svg style="left:930px;top:701px;" width="21" height="8" viewBox="0 0 21 8"><path d="M8 0.5 V7.5 H5.5 L2.5 4 L5.5 0.5Z" fill="#555555"/><path d="M12.5 0.5 V7.5 H15 L18 4 L15 0.5Z" fill="#9848c0"/></svg>
<div class="a" style="left:940px;top:697px;width:1px;height:16px;background:#2a2a2a;"></div>
<svg style="left:955px;top:699px;" width="12" height="12" viewBox="0 0 12 12"><circle cx="6" cy="6" r="4.6" fill="none" stroke="#777" stroke-width="1"/></svg>
<div class="a" style="left:496px;top:718px;width:18px;height:18px;background:#2a2a2a;border-radius:2px"></div>
<div class="a" style="left:515px;top:718px;width:18px;height:18px;background:#2a2a2a;border-radius:2px"></div>
<svg style="left:518px;top:720px;" width="14" height="14" viewBox="0 0 14 14"><path d="M11.5 5.5 A5 5 0 1 1 9 2.2" fill="none" stroke="#d0d0d0" stroke-width="1.2"/><path d="M4.5 6.5 L7 9 L12 3" fill="none" stroke="#d0d0d0" stroke-width="1.4"/></svg>
<div class="a" style="left:573px;top:719px;width:16px;height:16px;background:#c8ec78;border-radius:2px"></div>
<svg style="left:593px;top:723px;" width="15" height="9" viewBox="0 0 15 9"><path d="M4 0.5 H14.5 V8.5 H4 L0.5 4.5Z" fill="#d0d0d0"/><circle cx="5" cy="4.5" r="1.6" fill="#333"/></svg>
<svg style="left:646px;top:718px;" width="18" height="18" viewBox="0 0 18 18"><path d="M0.5 12 C1.5 9, 2.5 5, 3.5 5 C5 5, 6 14, 7.5 14 C9 14, 10 5, 11.5 5 C13 5, 14 14, 15.5 14 C16.3 14, 16.8 11, 17.5 9" fill="none" stroke="#8ed88e" stroke-width="1.3"/></svg>
<div class="t" style="left:667px;top:721px;color:#e6e6e6;font-size:12px;">Oscillator [Position.Z] Cosine</div>
<div class="a" style="left:930px;top:719px;width:21px;height:16px;background:#272727;border-radius:3px"></div>
<svg style="left:930px;top:723px;" width="21" height="8" viewBox="0 0 21 8"><path d="M8 0.5 V7.5 H5.5 L2.5 4 L5.5 0.5Z" fill="#d4c485"/><path d="M12.5 0.5 V7.5 H15 L18 4 L15 0.5Z" fill="#9848c0"/></svg>
<div class="a" style="left:940px;top:719px;width:1px;height:16px;background:#2a2a2a;"></div>
<svg style="left:955px;top:721px;" width="12" height="12" viewBox="0 0 12 12"><circle cx="6" cy="6" r="4.6" fill="none" stroke="#777" stroke-width="1"/></svg>
<div class="a" style="left:496px;top:740px;width:18px;height:18px;background:#303030;border-radius:2px"></div>
<div class="a" style="left:515px;top:740px;width:18px;height:18px;background:#303030;border-radius:2px"></div>
<svg style="left:518px;top:742px;" width="14" height="14" viewBox="0 0 14 14"><path d="M11.5 5.5 A5 5 0 1 1 9 2.2" fill="none" stroke="#707070" stroke-width="1.2"/><path d="M4.5 6.5 L7 9 L12 3" fill="none" stroke="#707070" stroke-width="1.4"/></svg>
<div class="a" style="left:573px;top:741px;width:16px;height:16px;background:#7f8c5a;border-radius:2px"></div>
<svg style="left:593px;top:745px;" width="15" height="9" viewBox="0 0 15 9"><path d="M4 0.5 H14.5 V8.5 H4 L0.5 4.5Z" fill="#6a6a6a"/><circle cx="5" cy="4.5" r="1.6" fill="#333"/></svg>
<svg style="left:646px;top:740px;" width="18" height="18" viewBox="0 0 18 18"><path d="M0.5 12 C1.5 9, 2.5 5, 3.5 5 C5 5, 6 14, 7.5 14 C9 14, 10 5, 11.5 5 C13 5, 14 14, 15.5 14 C16.3 14, 16.8 11, 17.5 9" fill="none" stroke="#6a9a6a" stroke-width="1.3"/></svg>
<div class="t" style="left:667px;top:743px;color:#8a8a8a;font-size:12px;text-decoration:line-through;">Oscillator [Position.X] Sine Driver</div>
<div class="a" style="left:930px;top:741px;width:21px;height:16px;background:#272727;border-radius:3px"></div>
<svg style="left:930px;top:745px;" width="21" height="8" viewBox="0 0 21 8"><path d="M8 0.5 V7.5 H5.5 L2.5 4 L5.5 0.5Z" fill="#d4c485"/><path d="M12.5 0.5 V7.5 H15 L18 4 L15 0.5Z" fill="#d050f0"/></svg>
<div class="a" style="left:940px;top:741px;width:1px;height:16px;background:#2a2a2a;"></div>
<svg style="left:955px;top:743px;" width="12" height="12" viewBox="0 0 12 12"><circle cx="6" cy="6" r="4.6" fill="none" stroke="#777" stroke-width="1"/></svg>
<svg style="left:912px;top:744px;" width="11" height="11" viewBox="0 0 11 11"><circle cx="5.5" cy="5.5" r="4.5" fill="none" stroke="#777" stroke-width="1"/><path d="M2.5 8.5 L8.5 2.5" stroke="#777" stroke-width="1"/></svg>
<div class="a" style="left:496px;top:762px;width:18px;height:18px;background:#2a2a2a;border-radius:2px"></div>
<div class="a" style="left:515px;top:762px;width:18px;height:18px;background:#2a2a2a;border-radius:2px"></div>
<svg style="left:518px;top:764px;" width="14" height="14" viewBox="0 0 14 14"><path d="M11.5 5.5 A5 5 0 1 1 9 2.2" fill="none" stroke="#d0d0d0" stroke-width="1.2"/><path d="M4.5 6.5 L7 9 L12 3" fill="none" stroke="#d0d0d0" stroke-width="1.4"/></svg>
<div class="a" style="left:573px;top:763px;width:16px;height:16px;background:#6a90e8;border-radius:2px"></div>
<svg style="left:593px;top:767px;" width="15" height="9" viewBox="0 0 15 9"><path d="M4 0.5 H14.5 V8.5 H4 L0.5 4.5Z" fill="#d0d0d0"/><circle cx="5" cy="4.5" r="1.6" fill="#333"/></svg>
<svg style="left:648px;top:760px;" width="18" height="18" viewBox="0 0 18 18"><rect x="1" y="5" width="11" height="11" fill="#a8d4ff"/><rect x="4" y="7" width="2.5" height="7" fill="#333"/><path d="M12 0 L13 3 L16 4 L13 5 L12 8 L11 5 L8 4 L11 3Z" fill="#eee"/></svg>
<div class="t" style="left:667px;top:765px;color:#e6e6e6;font-size:12px;">Index Context [Number]</div>
<div class="a" style="left:930px;top:763px;width:21px;height:16px;background:#2f2f2f;border-radius:3px"></div>
<svg style="left:930px;top:767px;" width="21" height="8" viewBox="0 0 21 8"><path d="M8 0.5 V7.5 H5.5 L2.5 4 L5.5 0.5Z" fill="#555555"/><path d="M12.5 0.5 V7.5 H15 L18 4 L15 0.5Z" fill="#9848c0"/></svg>
<div class="a" style="left:940px;top:763px;width:1px;height:16px;background:#2a2a2a;"></div>
<svg style="left:955px;top:765px;" width="12" height="12" viewBox="0 0 12 12"><circle cx="6" cy="6" r="4.6" fill="none" stroke="#777" stroke-width="1"/></svg>
<div class="a" style="left:496px;top:784px;width:18px;height:18px;background:#2a2a2a;border-radius:2px"></div>
<div class="a" style="left:515px;top:784px;width:18px;height:18px;background:#2a2a2a;border-radius:2px"></div>
<svg style="left:518px;top:786px;" width="14" height="14" viewBox="0 0 14 14"><path d="M11.5 5.5 A5 5 0 1 1 9 2.2" fill="none" stroke="#d0d0d0" stroke-width="1.2"/><path d="M4.5 6.5 L7 9 L12 3" fill="none" stroke="#d0d0d0" stroke-width="1.4"/></svg>
<div class="a" style="left:573px;top:785px;width:16px;height:16px;background:#6a90e8;border-radius:2px"></div>
<svg style="left:593px;top:789px;" width="15" height="9" viewBox="0 0 15 9"><path d="M4 0.5 H14.5 V8.5 H4 L0.5 4.5Z" fill="#d0d0d0"/><circle cx="5" cy="4.5" r="1.6" fill="#333"/></svg>
<svg style="left:648px;top:782px;" width="18" height="18" viewBox="0 0 18 18"><text x="0" y="10" font-size="9" fill="#ddd" font-family="Liberation Sans">abc</text><path d="M0 12.5 H16" stroke="#ddd" stroke-width="1"/></svg>
<div class="t" style="left:667px;top:787px;color:#e6e6e6;font-size:12px;">String Generator [String]</div>
<div class="a" style="left:930px;top:785px;width:21px;height:16px;background:#2f2f2f;border-radius:3px"></div>
<svg style="left:930px;top:789px;" width="21" height="8" viewBox="0 0 21 8"><path d="M8 0.5 V7.5 H5.5 L2.5 4 L5.5 0.5Z" fill="#8c8060"/><path d="M12.5 0.5 V7.5 H15 L18 4 L15 0.5Z" fill="#9848c0"/></svg>
<div class="a" style="left:940px;top:785px;width:1px;height:16px;background:#2a2a2a;"></div>
<svg style="left:955px;top:787px;" width="12" height="12" viewBox="0 0 12 12"><circle cx="6" cy="6" r="4.6" fill="none" stroke="#777" stroke-width="1"/></svg>
<div class="a" style="left:496px;top:806px;width:18px;height:18px;background:#2a2a2a;border-radius:2px"></div>
<div class="a" style="left:515px;top:806px;width:18px;height:18px;background:#2a2a2a;border-radius:2px"></div>
<svg style="left:518px;top:808px;" width="14" height="14" viewBox="0 0 14 14"><path d="M11.5 5.5 A5 5 0 1 1 9 2.2" fill="none" stroke="#d0d0d0" stroke-width="1.2"/><path d="M4.5 6.5 L7 9 L12 3" fill="none" stroke="#d0d0d0" stroke-width="1.4"/></svg>
<div class="a" style="left:573px;top:807px;width:16px;height:16px;background:#c8ec78;border-radius:2px"></div>
<svg style="left:593px;top:811px;" width="15" height="9" viewBox="0 0 15 9"><path d="M4 0.5 H14.5 V8.5 H4 L0.5 4.5Z" fill="#d0d0d0"/><circle cx="5" cy="4.5" r="1.6" fill="#333"/></svg>
<svg style="left:648px;top:804px;" width="18" height="18" viewBox="0 0 18 18"><path d="M2.5 1 V15.5 H15 M2.5 15.5 L10 8" fill="none" stroke="#ccc" stroke-width="1"/><path d="M12 12.5 L15 15.5 L12 18.5" fill="none" stroke="#8ed88e" stroke-width="1"/><path d="M0 3.5 L2.5 1 L5 3.5" fill="none" stroke="#8ed88e" stroke-width="1"/></svg>
<div class="t" style="left:667px;top:809px;color:#e6e6e6;font-size:12px;">3D Matrix [Duplicator]</div>
<div class="a" style="left:930px;top:807px;width:21px;height:16px;background:#272727;border-radius:3px"></div>
<svg style="left:930px;top:811px;" width="21" height="8" viewBox="0 0 21 8"><path d="M8 0.5 V7.5 H5.5 L2.5 4 L5.5 0.5Z" fill="#d4c485"/><path d="M12.5 0.5 V7.5 H15 L18 4 L15 0.5Z" fill="#9848c0"/></svg>
<div class="a" style="left:940px;top:807px;width:1px;height:16px;background:#2a2a2a;"></div>
<svg style="left:955px;top:809px;" width="12" height="12" viewBox="0 0 12 12"><circle cx="6" cy="6" r="4.6" fill="none" stroke="#777" stroke-width="1"/></svg>
<div class="a" style="left:496px;top:828px;width:18px;height:18px;background:#2a2a2a;border-radius:2px"></div>
<div class="a" style="left:515px;top:828px;width:18px;height:18px;background:#2a2a2a;border-radius:2px"></div>
<div class="a" style="left:534px;top:828px;width:18px;height:18px;background:#2a2a2a;border-radius:2px"></div>
<svg style="left:517px;top:832px;" width="16" height="10" viewBox="0 0 16 10"><path d="M1 5 Q8 -2 15 5 Q8 12 1 5Z" fill="none" stroke="#d0d0d0" stroke-width="1.1"/><circle cx="8" cy="5" r="2" fill="#d0d0d0"/></svg>
<div class="a" style="left:573px;top:829px;width:16px;height:16px;background:#ffe080;border-radius:2px"></div>
<svg style="left:593px;top:833px;" width="15" height="9" viewBox="0 0 15 9"><path d="M4 0.5 H14.5 V8.5 H4 L0.5 4.5Z" fill="#d0d0d0"/><circle cx="5" cy="4.5" r="1.6" fill="#333"/></svg>
<svg style="left:648px;top:826px;" width="18" height="18" viewBox="0 0 18 18"><rect x="1" y="3" width="1.8" height="1.8" fill="#e9d66b"/><rect x="1" y="9" width="1.8" height="1.8" fill="#e9d66b"/><rect x="1" y="15" width="1.8" height="1.8" fill="#e9d66b"/><rect x="7" y="3" width="1.8" height="1.8" fill="#e9d66b"/><rect x="7" y="9" width="1.8" height="1.8" fill="#e9d66b"/><rect x="7" y="15" width="1.8" height="1.8" fill="#e9d66b"/><rect x="13" y="3" width="1.8" height="1.8" fill="#e9d66b"/><rect x="13" y="9" width="1.8" height="1.8" fill="#e9d66b"/><rect x="13" y="15" width="1.8" height="1.8" fill="#e9d66b"/></svg>
<div class="t" style="left:667px;top:831px;color:#e6e6e6;font-size:12px;">Duplicator</div>
<div class="a" style="left:930px;top:829px;width:21px;height:16px;background:#2f2f2f;border-radius:3px"></div>
<svg style="left:930px;top:833px;" width="21" height="8" viewBox="0 0 21 8"><path d="M8 0.5 V7.5 H5.5 L2.5 4 L5.5 0.5Z" fill="#8c8060"/><path d="M12.5 0.5 V7.5 H15 L18 4 L15 0.5Z" fill="#9848c0"/></svg>
<div class="a" style="left:940px;top:829px;width:1px;height:16px;background:#2a2a2a;"></div>
<svg style="left:955px;top:831px;" width="12" height="12" viewBox="0 0 12 12"><circle cx="6" cy="6" r="4.6" fill="none" stroke="#777" stroke-width="1"/></svg>
<div class="a" style="left:496px;top:850px;width:18px;height:18px;background:#2a2a2a;border-radius:2px"></div>
<div class="a" style="left:515px;top:850px;width:18px;height:18px;background:#2a2a2a;border-radius:2px"></div>
<div class="a" style="left:534px;top:850px;width:18px;height:18px;background:#2a2a2a;border-radius:2px"></div>
<div class="a" style="left:573px;top:851px;width:16px;height:16px;background:#ffe080;border-radius:2px"></div>
<svg style="left:593px;top:855px;" width="15" height="9" viewBox="0 0 15 9"><path d="M4 0.5 H14.5 V8.5 H4 L0.5 4.5Z" fill="#d0d0d0"/><circle cx="5" cy="4.5" r="1.6" fill="#333"/></svg>
<div class="a" style="left:610px;top:850px;width:31px;height:18px;background:#2f2f2f;border-radius:2px"></div>
<div class="a" style="left:610px;top:850px;width:15px;height:18px;background:#2d2d2d;border-radius:2px"></div>
<svg style="left:613px;top:857px;" width="9" height="6" viewBox="0 0 9 6"><path d="M0.5 0.5 L4.5 4.5 L8.5 0.5" fill="none" stroke="#888" stroke-width="1"/></svg>
<svg style="left:648px;top:848px;" width="18" height="18" viewBox="0 0 18 18"><rect x="1.5" y="3" width="12" height="12" fill="none" stroke="#e9d66b" stroke-width="1" stroke-dasharray="3 1.5"/></svg>
<div class="t" style="left:667px;top:853px;color:#e6e6e6;font-size:12px;">Ellipse Shape</div>
<div class="a" style="left:930px;top:851px;width:21px;height:16px;background:#2f2f2f;border-radius:3px"></div>
<svg style="left:930px;top:855px;" width="21" height="8" viewBox="0 0 21 8"><path d="M8 0.5 V7.5 H5.5 L2.5 4 L5.5 0.5Z" fill="#8c8060"/><path d="M12.5 0.5 V7.5 H15 L18 4 L15 0.5Z" fill="#9848c0"/></svg>
<div class="a" style="left:940px;top:851px;width:1px;height:16px;background:#2a2a2a;"></div>
<svg style="left:955px;top:853px;" width="12" height="12" viewBox="0 0 12 12"><circle cx="6" cy="6" r="4.6" fill="none" stroke="#777" stroke-width="1"/></svg>
<div class="a" style="left:496px;top:872px;width:18px;height:18px;background:#2a2a2a;border-radius:2px"></div>
<div class="a" style="left:515px;top:872px;width:18px;height:18px;background:#2a2a2a;border-radius:2px"></div>
<div class="a" style="left:534px;top:872px;width:18px;height:18px;background:#2a2a2a;border-radius:2px"></div>
<svg style="left:517px;top:876px;" width="16" height="10" viewBox="0 0 16 10"><path d="M1 5 Q8 -2 15 5 Q8 12 1 5Z" fill="none" stroke="#555" stroke-width="1.1"/><circle cx="8" cy="5" r="2" fill="#555"/></svg>
<div class="a" style="left:573px;top:873px;width:16px;height:16px;background:#b890f8;border-radius:2px"></div>
<svg style="left:593px;top:877px;" width="15" height="9" viewBox="0 0 15 9"><path d="M4 0.5 H14.5 V8.5 H4 L0.5 4.5Z" fill="#d0d0d0"/><circle cx="5" cy="4.5" r="1.6" fill="#333"/></svg>
<svg style="left:667px;top:870px;" width="18" height="18" viewBox="0 0 18 18"><rect x="1.5" y="1.5" width="14" height="15" fill="none" stroke="#ddd" stroke-width="1" stroke-dasharray="4 1.2"/><path d="M4.5 5 H12.5 M8.5 5 V14" stroke="#e9d66b" stroke-width="2"/></svg>
<div class="t" style="left:686px;top:875px;color:#e6e6e6;font-size:12px;">Cavalry</div>
<div class="a" style="left:930px;top:873px;width:21px;height:16px;background:#2f2f2f;border-radius:3px"></div>
<svg style="left:930px;top:877px;" width="21" height="8" viewBox="0 0 21 8"><path d="M8 0.5 V7.5 H5.5 L2.5 4 L5.5 0.5Z" fill="#8c8060"/><path d="M12.5 0.5 V7.5 H15 L18 4 L15 0.5Z" fill="#555555"/></svg>
<div class="a" style="left:940px;top:873px;width:1px;height:16px;background:#2a2a2a;"></div>
<svg style="left:955px;top:875px;" width="12" height="12" viewBox="0 0 12 12"><circle cx="6" cy="6" r="4.6" fill="none" stroke="#777" stroke-width="1"/></svg>
<div class="a" style="left:972px;top:673px;width:10px;height:290px;background:#4d4d4d;border-radius:5px"></div>
<div class="a" style="left:971px;top:962px;width:13px;height:14px;background:#2e2e2e;"></div>
<div class="a" style="left:497px;top:964px;width:471px;height:10px;background:#4d4d4d;border-radius:5px"></div>
<div class="a" style="left:544px;top:734px;width:431px;height:30px;background:transparent;border:3px solid #c4ee1a"></div>
<div class="a" style="left:494px;top:976px;width:490px;height:22px;background:#444444;"></div>
<div class="a" style="left:497px;top:978px;width:20px;height:18px;background:#2c2c2c;border-radius:4px;border:1px solid #222"></div>
<svg style="left:500px;top:983px;" width="15" height="9" viewBox="0 0 15 9"><path d="M4 0.5 H14.5 V8.5 H4 L0.5 4.5Z" fill="#d0d0d0"/><circle cx="5" cy="4.5" r="1.6" fill="#333"/></svg>
<div class="a" style="left:776px;top:977px;width:19px;height:20px;background:#2c2c2c;border-radius:4px;border:1px solid #1f1f1f"></div>
<svg style="left:779px;top:980px;" width="13" height="14" viewBox="0 0 13 14"><rect x="1" y="1.5" width="11" height="11" fill="none" stroke="#ccc" stroke-width="1.2"/><circle cx="6.5" cy="7" r="1.6" fill="#ddd"/></svg>
<div class="a" style="left:798px;top:978px;width:184px;height:18px;background:#5a5a5a;border-radius:4px"></div>
<div class="a" style="left:799px;top:979px;width:87px;height:16px;background:#262626;border-radius:3px"></div>
<svg style="left:805px;top:981px;" width="13" height="12" viewBox="0 0 13 12"><path d="M2 1.5 H12 M0 6 H10 M2 10.5 H12" stroke="#35c964" stroke-width="1.8"/></svg>
<div class="t" style="left:821px;top:981px;color:#e6e6e6;font-size:12px;">Time Editor</div>
<svg style="left:893px;top:980px;" width="14" height="14" viewBox="0 0 14 14"><path d="M2.5 1 V13 M1 11.5 H12 M3 11 L11 5" stroke="#ccc" stroke-width="0.9" fill="none"/></svg>
<div class="t" style="left:910px;top:981px;color:#e6e6e6;font-size:12px;">Graph Editor</div>
<div class="a" style="left:984px;top:630px;width:7px;height:368px;background:#1c1c1c;"></div>
<div class="a" style="left:986px;top:806px;width:1px;height:1px;background:#777;"></div>
<div class="a" style="left:986px;top:809px;width:1px;height:1px;background:#777;"></div>
<div class="a" style="left:986px;top:812px;width:1px;height:1px;background:#777;"></div>
<div class="a" style="left:986px;top:815px;width:1px;height:1px;background:#777;"></div>
<div class="a" style="left:986px;top:818px;width:1px;height:1px;background:#777;"></div>
<div class="a" style="left:986px;top:821px;width:1px;height:1px;background:#777;"></div>
<div class="a" style="left:986px;top:824px;width:1px;height:1px;background:#777;"></div>
<div class="a" style="left:991px;top:630px;width:923px;height:368px;background:#2a2a2a;"></div>
<div class="a" style="left:991px;top:630px;width:923px;height:24px;background:#222222;"></div>
<div class="a" style="left:998px;top:646px;width:1px;height:8px;background:#8a8a8a;"></div>
<div class="a" style="left:1009px;top:650px;width:1px;height:4px;background:#6a6a6a;"></div>
<div class="a" style="left:1020px;top:650px;width:1px;height:4px;background:#6a6a6a;"></div>
<div class="a" style="left:1031px;top:650px;width:1px;height:4px;background:#6a6a6a;"></div>
<div class="a" style="left:1042px;top:650px;width:1px;height:4px;background:#6a6a6a;"></div>
<div class="a" style="left:1052px;top:646px;width:1px;height:8px;background:#8a8a8a;"></div>
<div class="a" style="left:1063px;top:650px;width:1px;height:4px;background:#6a6a6a;"></div>
<div class="a" style="left:1074px;top:650px;width:1px;height:4px;background:#6a6a6a;"></div>
<div class="a" style="left:1085px;top:650px;width:1px;height:4px;background:#6a6a6a;"></div>
<div class="a" style="left:1096px;top:650px;width:1px;height:4px;background:#6a6a6a;"></div>
<div class="a" style="left:1107px;top:646px;width:1px;height:8px;background:#8a8a8a;"></div>
<div class="a" style="left:1118px;top:650px;width:1px;height:4px;background:#6a6a6a;"></div>
<div class="a" style="left:1129px;top:650px;width:1px;height:4px;background:#6a6a6a;"></div>
<div class="a" style="left:1140px;top:650px;width:1px;height:4px;background:#6a6a6a;"></div>
<div class="a" style="left:1150px;top:650px;width:1px;height:4px;background:#6a6a6a;"></div>
<div class="a" style="left:1161px;top:646px;width:1px;height:8px;background:#8a8a8a;"></div>
<div class="a" style="left:1172px;top:650px;width:1px;height:4px;background:#6a6a6a;"></div>
<div class="a" style="left:1183px;top:650px;width:1px;height:4px;background:#6a6a6a;"></div>
<div class="a" style="left:1194px;top:650px;width:1px;height:4px;background:#6a6a6a;"></div>
<div class="a" style="left:1205px;top:650px;width:1px;height:4px;background:#6a6a6a;"></div>
<div class="a" style="left:1216px;top:646px;width:1px;height:8px;background:#8a8a8a;"></div>
<div class="a" style="left:1227px;top:650px;width:1px;height:4px;background:#6a6a6a;"></div>
<div class="a" style="left:1238px;top:650px;width:1px;height:4px;background:#6a6a6a;"></div>
<div class="a" style="left:1248px;top:650px;width:1px;height:4px;background:#6a6a6a;"></div>
<div class="a" style="left:1259px;top:650px;width:1px;height:4px;background:#6a6a6a;"></div>
<div class="a" style="left:1270px;top:646px;width:1px;height:8px;background:#8a8a8a;"></div>
<div class="a" style="left:1281px;top:650px;width:1px;height:4px;background:#6a6a6a;"></div>
<div class="a" style="left:1292px;top:650px;width:1px;height:4px;background:#6a6a6a;"></div>
<div class="a" style="left:1303px;top:650px;width:1px;height:4px;background:#6a6a6a;"></div>
<div class="a" style="left:1314px;top:650px;width:1px;height:4px;background:#6a6a6a;"></div>
<div class="a" style="left:1325px;top:646px;width:1px;height:8px;background:#8a8a8a;"></div>
<div class="a" style="left:1336px;top:650px;width:1px;height:4px;background:#6a6a6a;"></div>
<div class="a" style="left:1346px;top:650px;width:1px;height:4px;background:#6a6a6a;"></div>
<div class="a" style="left:1357px;top:650px;width:1px;height:4px;background:#6a6a6a;"></div>
<div class="a" style="left:1368px;top:650px;width:1px;height:4px;background:#6a6a6a;"></div>
<div class="a" style="left:1379px;top:646px;width:1px;height:8px;background:#8a8a8a;"></div>
<div class="a" style="left:1390px;top:650px;width:1px;height:4px;background:#6a6a6a;"></div>
<div class="a" style="left:1401px;top:650px;width:1px;height:4px;background:#6a6a6a;"></div>
<div class="a" style="left:1412px;top:650px;width:1px;height:4px;background:#6a6a6a;"></div>
<div class="a" style="left:1423px;top:650px;width:1px;height:4px;background:#6a6a6a;"></div>
<div class="a" style="left:1434px;top:646px;width:1px;height:8px;background:#8a8a8a;"></div>
<div class="a" style="left:1444px;top:650px;width:1px;height:4px;background:#6a6a6a;"></div>
<div class="a" style="left:1455px;top:650px;width:1px;height:4px;background:#6a6a6a;"></div>
<div class="a" style="left:1466px;top:650px;width:1px;height:4px;background:#6a6a6a;"></div>
<div class="a" style="left:1477px;top:650px;width:1px;height:4px;background:#6a6a6a;"></div>
<div class="a" style="left:1488px;top:646px;width:1px;height:8px;background:#8a8a8a;"></div>
<div class="a" style="left:1499px;top:650px;width:1px;height:4px;background:#6a6a6a;"></div>
<div class="a" style="left:1510px;top:650px;width:1px;height:4px;background:#6a6a6a;"></div>
<div class="a" style="left:1521px;top:650px;width:1px;height:4px;background:#6a6a6a;"></div>
<div class="a" style="left:1531px;top:650px;width:1px;height:4px;background:#6a6a6a;"></div>
<div class="a" style="left:1542px;top:646px;width:1px;height:8px;background:#8a8a8a;"></div>
<div class="a" style="left:1553px;top:650px;width:1px;height:4px;background:#6a6a6a;"></div>
<div class="a" style="left:1564px;top:650px;width:1px;height:4px;background:#6a6a6a;"></div>
<div class="a" style="left:1575px;top:650px;width:1px;height:4px;background:#6a6a6a;"></div>
<div class="a" style="left:1586px;top:650px;width:1px;height:4px;background:#6a6a6a;"></div>
<div class="a" style="left:1597px;top:646px;width:1px;height:8px;background:#8a8a8a;"></div>
<div class="a" style="left:1608px;top:650px;width:1px;height:4px;background:#6a6a6a;"></div>
<div class="a" style="left:1619px;top:650px;width:1px;height:4px;background:#6a6a6a;"></div>
<div class="a" style="left:1629px;top:650px;width:1px;height:4px;background:#6a6a6a;"></div>
<div class="a" style="left:1640px;top:650px;width:1px;height:4px;background:#6a6a6a;"></div>
<div class="a" style="left:1651px;top:646px;width:1px;height:8px;background:#8a8a8a;"></div>
<div class="a" style="left:1662px;top:650px;width:1px;height:4px;background:#6a6a6a;"></div>
<div class="a" style="left:1673px;top:650px;width:1px;height:4px;background:#6a6a6a;"></div>
<div class="a" style="left:1684px;top:650px;width:1px;height:4px;background:#6a6a6a;"></div>
<div class="a" style="left:1695px;top:650px;width:1px;height:4px;background:#6a6a6a;"></div>
<div class="a" style="left:1706px;top:646px;width:1px;height:8px;background:#8a8a8a;"></div>
<div class="a" style="left:1717px;top:650px;width:1px;height:4px;background:#6a6a6a;"></div>
<div class="a" style="left:1727px;top:650px;width:1px;height:4px;background:#6a6a6a;"></div>
<div class="a" style="left:1738px;top:650px;width:1px;height:4px;background:#6a6a6a;"></div>
<div class="a" style="left:1749px;top:650px;width:1px;height:4px;background:#6a6a6a;"></div>
<div class="a" style="left:1760px;top:646px;width:1px;height:8px;background:#8a8a8a;"></div>
<div class="a" style="left:1771px;top:650px;width:1px;height:4px;background:#6a6a6a;"></div>
<div class="a" style="left:1782px;top:650px;width:1px;height:4px;background:#6a6a6a;"></div>
<div class="a" style="left:1793px;top:650px;width:1px;height:4px;background:#6a6a6a;"></div>
<div class="a" style="left:1804px;top:650px;width:1px;height:4px;background:#6a6a6a;"></div>
<div class="a" style="left:1815px;top:646px;width:1px;height:8px;background:#8a8a8a;"></div>
<div class="a" style="left:1825px;top:650px;width:1px;height:4px;background:#6a6a6a;"></div>
<div class="a" style="left:1836px;top:650px;width:1px;height:4px;background:#6a6a6a;"></div>
<div class="a" style="left:1847px;top:650px;width:1px;height:4px;background:#6a6a6a;"></div>
<div class="a" style="left:1858px;top:650px;width:1px;height:4px;background:#6a6a6a;"></div>
<div class="a" style="left:1869px;top:646px;width:1px;height:8px;background:#8a8a8a;"></div>
<div class="a" style="left:1880px;top:650px;width:1px;height:4px;background:#6a6a6a;"></div>
<div class="a" style="left:1891px;top:650px;width:1px;height:4px;background:#6a6a6a;"></div>
<div class="a" style="left:1902px;top:650px;width:1px;height:4px;background:#6a6a6a;"></div>
<div class="t" style="left:798px;width:400px;text-align:center;top:632px;color:#dcdcdc;font-size:12px;">0</div>
<div class="t" style="left:852px;width:400px;text-align:center;top:632px;color:#dcdcdc;font-size:12px;">15</div>
<div class="t" style="left:907px;width:400px;text-align:center;top:632px;color:#dcdcdc;font-size:12px;">30</div>
<div class="t" style="left:961px;width:400px;text-align:center;top:632px;color:#dcdcdc;font-size:12px;">45</div>
<div class="t" style="left:1016px;width:400px;text-align:center;top:632px;color:#dcdcdc;font-size:12px;">60</div>
<div class="t" style="left:1070px;width:400px;text-align:center;top:632px;color:#dcdcdc;font-size:12px;">75</div>
<div class="t" style="left:1125px;width:400px;text-align:center;top:632px;color:#dcdcdc;font-size:12px;">90</div>
<div class="t" style="left:1179px;width:400px;text-align:center;top:632px;color:#dcdcdc;font-size:12px;">105</div>
<div class="t" style="left:1234px;width:400px;text-align:center;top:632px;color:#dcdcdc;font-size:12px;">120</div>
<div class="t" style="left:1288px;width:400px;text-align:center;top:632px;color:#dcdcdc;font-size:12px;">135</div>
<div class="t" style="left:1342px;width:400px;text-align:center;top:632px;color:#dcdcdc;font-size:12px;">150</div>
<div class="t" style="left:1397px;width:400px;text-align:center;top:632px;color:#dcdcdc;font-size:12px;">165</div>
<div class="t" style="left:1451px;width:400px;text-align:center;top:632px;color:#dcdcdc;font-size:12px;">180</div>
<div class="t" style="left:1506px;width:400px;text-align:center;top:632px;color:#dcdcdc;font-size:12px;">195</div>
<div class="t" style="left:1560px;width:400px;text-align:center;top:632px;color:#dcdcdc;font-size:12px;">210</div>
<div class="t" style="left:1615px;width:400px;text-align:center;top:632px;color:#dcdcdc;font-size:12px;">225</div>
<div class="t" style="left:1669px;width:400px;text-align:center;top:632px;color:#dcdcdc;font-size:12px;">240</div>
<div class="a" style="left:994px;top:655px;width:918px;height:15px;background:#434343;"></div>
<div class="a" style="left:995px;top:654px;width:5px;height:17px;background:#6cc0a8;border-radius:1px"></div>
<div class="a" style="left:1905px;top:654px;width:5px;height:17px;background:#6cc0a8;border-radius:1px"></div>
<div class="a" style="left:991px;top:671px;width:9px;height:291px;background:#222222;"></div>
<div class="a" style="left:1000px;top:674px;width:905px;height:18px;background:#63c98c;background:repeating-linear-gradient(135deg,#88efb2 0px,#88efb2 1.8px,#74dc9e 1.8px,#74dc9e 12.7px,#88efb2 12.7px,#88efb2 14.5px,#63c98c 14.5px,#63c98c 25.5px);background-position:-3px 0;border-radius:3px"></div>
<div class="t" style="left:1008px;top:676px;color:#1e1e1e;font-size:12px;">Color Array</div>
<div class="a" style="left:1000px;top:696px;width:905px;height:18px;background:#b8d672;background:repeating-linear-gradient(135deg,#def894 0px,#def894 1.8px,#cbe97f 1.8px,#cbe97f 12.7px,#def894 12.7px,#def894 14.5px,#b8d672 14.5px,#b8d672 25.5px);background-position:-3px 0;border-radius:3px"></div>
<div class="t" style="left:1008px;top:698px;color:#333;font-size:12px;">Random [Index]</div>
<div class="a" style="left:1000px;top:718px;width:905px;height:18px;background:#b8d672;background:repeating-linear-gradient(135deg,#def894 0px,#def894 1.8px,#cbe97f 1.8px,#cbe97f 12.7px,#def894 12.7px,#def894 14.5px,#b8d672 14.5px,#b8d672 25.5px);background-position:-3px 0;border-radius:3px"></div>
<div class="t" style="left:1008px;top:720px;color:#222;font-size:12px;">Oscillator [Position.Z] Cosine</div>
<div class="a" style="left:1000px;top:740px;width:905px;height:18px;background:#b8d672;background:repeating-linear-gradient(135deg,#def894 0px,#def894 1.8px,#cbe97f 1.8px,#cbe97f 12.7px,#def894 12.7px,#def894 14.5px,#b8d672 14.5px,#b8d672 25.5px);background-position:-3px 0;border-radius:3px"></div>
<div class="t" style="left:1008px;top:742px;color:#222;font-size:12px;">Oscillator [Position.X] Sine Driver</div>
<div class="a" style="left:1000px;top:762px;width:905px;height:18px;background:#587fd4;background:repeating-linear-gradient(135deg,#7ea8f6 0px,#7ea8f6 1.8px,#6890e6 1.8px,#6890e6 12.7px,#7ea8f6 12.7px,#7ea8f6 14.5px,#587fd4 14.5px,#587fd4 25.5px);background-position:-3px 0;border-radius:3px"></div>
<div class="t" style="left:1008px;top:764px;color:#f4f4f4;font-size:12px;">Index Context [Number]</div>
<div class="a" style="left:1000px;top:784px;width:905px;height:18px;background:#587fd4;background:repeating-linear-gradient(135deg,#7ea8f6 0px,#7ea8f6 1.8px,#6890e6 1.8px,#6890e6 12.7px,#7ea8f6 12.7px,#7ea8f6 14.5px,#587fd4 14.5px,#587fd4 25.5px);background-position:-3px 0;border-radius:3px"></div>
<div class="t" style="left:1008px;top:786px;color:#f4f4f4;font-size:12px;">String Generator [String]</div>
<div class="a" style="left:1000px;top:806px;width:905px;height:18px;background:#b8d672;background:repeating-linear-gradient(135deg,#def894 0px,#def894 1.8px,#cbe97f 1.8px,#cbe97f 12.7px,#def894 12.7px,#def894 14.5px,#b8d672 14.5px,#b8d672 25.5px);background-position:-3px 0;border-radius:3px"></div>
<div class="t" style="left:1008px;top:808px;color:#222;font-size:12px;">3D Matrix [Duplicator]</div>
<div class="a" style="left:1000px;top:828px;width:905px;height:18px;background:#ffe680;background:#ffe680;background-position:-3px 0;border-radius:3px"></div>
<div class="t" style="left:1008px;top:830px;color:#222;font-size:12px;">Duplicator</div>
<div class="a" style="left:1000px;top:850px;width:905px;height:18px;background:#ffe680;background:#ffe680;background-position:-3px 0;border-radius:3px"></div>
<div class="t" style="left:1008px;top:852px;color:#222;font-size:12px;">Ellipse Shape</div>
<div class="a" style="left:1000px;top:872px;width:905px;height:18px;background:#b490f8;background:#b490f8;background-position:-3px 0;border-radius:3px"></div>
<div class="t" style="left:1008px;top:874px;color:#f4f4f4;font-size:12px;">Cavalry</div>
<div class="a" style="left:1615px;top:648px;width:1px;height:314px;background:#5cc0a0;"></div>
<svg style="left:1605px;top:642px;" width="21" height="12" viewBox="0 0 21 12"><path d="M1 1 H20 L10.5 11Z" fill="#6cc4a8"/></svg>
<div class="a" style="left:1905px;top:671px;width:9px;height:291px;background:#262626;"></div>
<div class="a" style="left:992px;top:964px;width:921px;height:10px;background:#4d4d4d;border-radius:5px"></div>
<div class="a" style="left:991px;top:976px;width:923px;height:22px;background:#3c3c3c;"></div>
<div class="a" style="left:994px;top:979px;width:17px;height:17px;background:#2c2c2c;border-radius:3px;border:1px solid #222"></div>
<svg style="left:996px;top:981px;" width="13" height="13" viewBox="0 0 13 13"><path d="M1 2 H12 M3 5 H12 M1 8 H8 M1 11 H3 M5 11 H7" stroke="#ddd" stroke-width="1.2"/></svg>
<div class="a" style="left:1015px;top:979px;width:150px;height:16px;background:#282828;border-radius:3px"></div>
<div class="t" style="left:1017px;top:981px;color:#e6e6e6;font-size:12px;">Default Keyframe Layer</div>
<div class="a" style="left:1171px;top:979px;width:70px;height:16px;background:#282828;border-radius:3px"></div>
<div class="t" style="left:1176px;top:981px;color:#555;font-size:12px;">F</div>
<div class="t" style="left:1189px;top:981px;color:#ddd;font-size:12px;">-</div>
<div class="t" style="left:1247px;top:981px;color:#e6e6e6;font-size:12px;">Align:</div>
<div class="a" style="left:1284px;top:978px;width:53px;height:18px;background:#2a2a2a;border-radius:4px;border:1px solid #1e1e1e"></div>
<svg style="left:1286px;top:980px;" width="16" height="14" viewBox="0 0 16 14"><path d="M1.5 1 V13" stroke="#ddd"/><path d="M3 4 H7 M3 10 H11" stroke="#ddd" stroke-width="2"/><circle cx="4" cy="7" r="1" fill="#6cc0a8"/></svg>
<svg style="left:1303px;top:980px;" width="16" height="14" viewBox="0 0 16 14"><path d="M8 1 V13" stroke="#ddd" stroke-dasharray="2 1"/><path d="M4 4 H12 M3 10 H13" stroke="#ddd" stroke-width="2"/><circle cx="8" cy="7" r="1.2" fill="#6cc0a8"/></svg>
<div class="a" style="left:1302px;top:979px;width:1px;height:16px;background:#3a3a3a;"></div>
<svg style="left:1321px;top:980px;" width="16" height="14" viewBox="0 0 16 14"><path d="M14.5 1 V13" stroke="#ddd"/><path d="M8 4 H13 M4 10 H13" stroke="#ddd" stroke-width="2"/><circle cx="11" cy="7" r="1" fill="#6cc0a8"/></svg>
<div class="a" style="left:1320px;top:979px;width:1px;height:16px;background:#3a3a3a;"></div>
<div class="a" style="left:1341px;top:978px;width:17px;height:18px;background:#2c2c2c;border-radius:4px;border:1px solid #1e1e1e"></div>
<svg style="left:1342px;top:980px;" width="15" height="14" viewBox="0 0 15 14"><rect x="2" y="2" width="11" height="10" fill="none" stroke="#ccc" stroke-dasharray="2 1.5"/><circle cx="7.5" cy="7" r="1" fill="#ddd"/></svg>
<div class="a" style="left:1362px;top:978px;width:30px;height:18px;background:#2c2c2c;border-radius:4px;border:1px solid #1e1e1e"></div>
<svg style="left:1364px;top:980px;" width="14" height="14" viewBox="0 0 14 14"><g transform="rotate(-40 7 7)"><path d="M2.5 12 V7 A4.5 4.5 0 0 1 11.5 7 V12" fill="none" stroke="#d0d0d0" stroke-width="2.4"/></g></svg>
<svg style="left:1381px;top:983px;" width="8" height="9" viewBox="0 0 8 9"><path d="M1 1 L7 4.5 L1 8Z" fill="none" stroke="#999" stroke-width="1"/></svg>
<div class="a" style="left:1397px;top:978px;width:30px;height:18px;background:#2c2c2c;border-radius:4px;border:1px solid #1e1e1e"></div>
<svg style="left:1399px;top:980px;" width="15" height="14" viewBox="0 0 15 14"><path d="M1 7 H14 M5 3 V11 M8 1 V13 M11 4 V10" stroke="#ccc" stroke-width="1"/></svg>
<svg style="left:1416px;top:983px;" width="8" height="9" viewBox="0 0 8 9"><path d="M1 1 L7 4.5 L1 8Z" fill="none" stroke="#999" stroke-width="1"/></svg>
<svg style="left:1743px;top:980px;" width="14" height="14" viewBox="0 0 14 14"><circle cx="6" cy="6" r="5" fill="none" stroke="#ccc" stroke-width="1.1"/><path d="M3.5 6 H8.5" stroke="#ccc" stroke-width="1.1"/><path d="M9.5 9.5 L13 13" stroke="#ccc" stroke-width="1.6"/></svg>
<div class="a" style="left:1767px;top:985px;width:115px;height:3px;background:#2f2f2f;border-radius:2px"></div>
<div class="a" style="left:1761px;top:981px;width:11px;height:11px;background:#6cc0a8;border-radius:50%"></div>
<div class="a" style="left:1764px;top:984px;width:5px;height:5px;background:#58a08c;border-radius:50%"></div>
<svg style="left:1887px;top:980px;" width="14" height="14" viewBox="0 0 14 14"><circle cx="6" cy="6" r="5" fill="none" stroke="#ccc" stroke-width="1.1"/><path d="M3.5 6 H8.5 M6 3.5 V8.5" stroke="#ccc" stroke-width="1.1"/><path d="M9.5 9.5 L13 13" stroke="#ccc" stroke-width="1.6"/></svg>
<div class="a" style="left:494px;top:998px;width:1420px;height:6px;background:#141414;"></div>
<div class="a" style="left:494px;top:1004px;width:1420px;height:22px;background:#393939;"></div>
<div class="a" style="left:0px;top:1026px;width:1920px;height:2px;background:#1e1e1e;"></div>
<div class="a" style="left:498px;top:1010px;width:2px;height:2px;background:#888;"></div>
<div class="a" style="left:498px;top:1014px;width:2px;height:2px;background:#888;"></div>
<div class="a" style="left:498px;top:1018px;width:2px;height:2px;background:#888;"></div>
<div class="a" style="left:506px;top:1007px;width:18px;height:17px;background:#2a2a2a;border-radius:3px"></div>
<svg style="left:508px;top:1009px;" width="14" height="13" viewBox="0 0 14 13"><rect x="1" y="1" width="11" height="9" fill="#ddd"/><path d="M3 3.5 H10 M3 5.5 H10 M3 7.5 H8" stroke="#444" stroke-width="1"/><path d="M7 10 L10 13 V10" fill="#ddd"/></svg>
<div class="a" style="left:528px;top:1008px;width:18px;height:14px;background:#d8c070;border-radius:2px"></div>
<div class="t" style="left:337px;width:400px;text-align:center;top:1009px;color:#333;font-size:12px;">0</div>
<div class="a" style="left:554px;top:1012px;width:6px;height:6px;background:#d8b860;border-radius:50%"></div>
<div class="t" style="left:565px;top:1009px;color:#dcdcdc;font-size:12px;">You are working in an unsaved scene.</div>
<div class="a" style="left:1610px;top:1006px;width:80px;height:18px;background:#d2bd76;border-radius:2px"></div>
<div class="t" style="left:1615px;top:1009px;color:#333;font-size:12px;">Feedback</div>
<svg style="left:1671px;top:1007px;" width="14" height="16" viewBox="0 0 14 16"><rect x="1" y="1" width="11" height="14" fill="#eee" stroke="#4c4" stroke-width="0.8"/><path d="M5 11 L11 5" stroke="#f08040" stroke-width="2.5"/></svg>
<div class="a" style="left:1693px;top:1006px;width:109px;height:18px;background:#33cc6a;border-radius:2px"></div>
<div class="t" style="left:1698px;top:1009px;color:#1e1e1e;font-size:11.6px;">Upgrade to Pro</div>
<svg style="left:1781px;top:1008px;" width="14" height="14" viewBox="0 0 14 14"><circle cx="4" cy="9" r="3.5" fill="#f4c030"/><circle cx="10" cy="9" r="3.5" fill="#f4c030"/></svg>
<div class="a" style="left:1805px;top:1006px;width:106px;height:18px;background:#3aacf0;border-radius:2px"></div>
<div class="t" style="left:1810px;top:1009px;color:#1e1e1e;font-size:11.3px;">Tips and Tricks</div>
<svg style="left:1890px;top:1007px;" width="14" height="15" viewBox="0 0 14 15"><path d="M12 1 L5 8 L7 10 L14 3Z" fill="#eee"/><circle cx="10" cy="5" r="1.3" fill="#4aa0f0"/><path d="M5 8 L2 9 L3 10Z M7 10 L6 13 L5 12Z" fill="#e04040"/><path d="M4 11 L1 14" stroke="#f08030" stroke-width="1.5"/></svg>
</body></html>
